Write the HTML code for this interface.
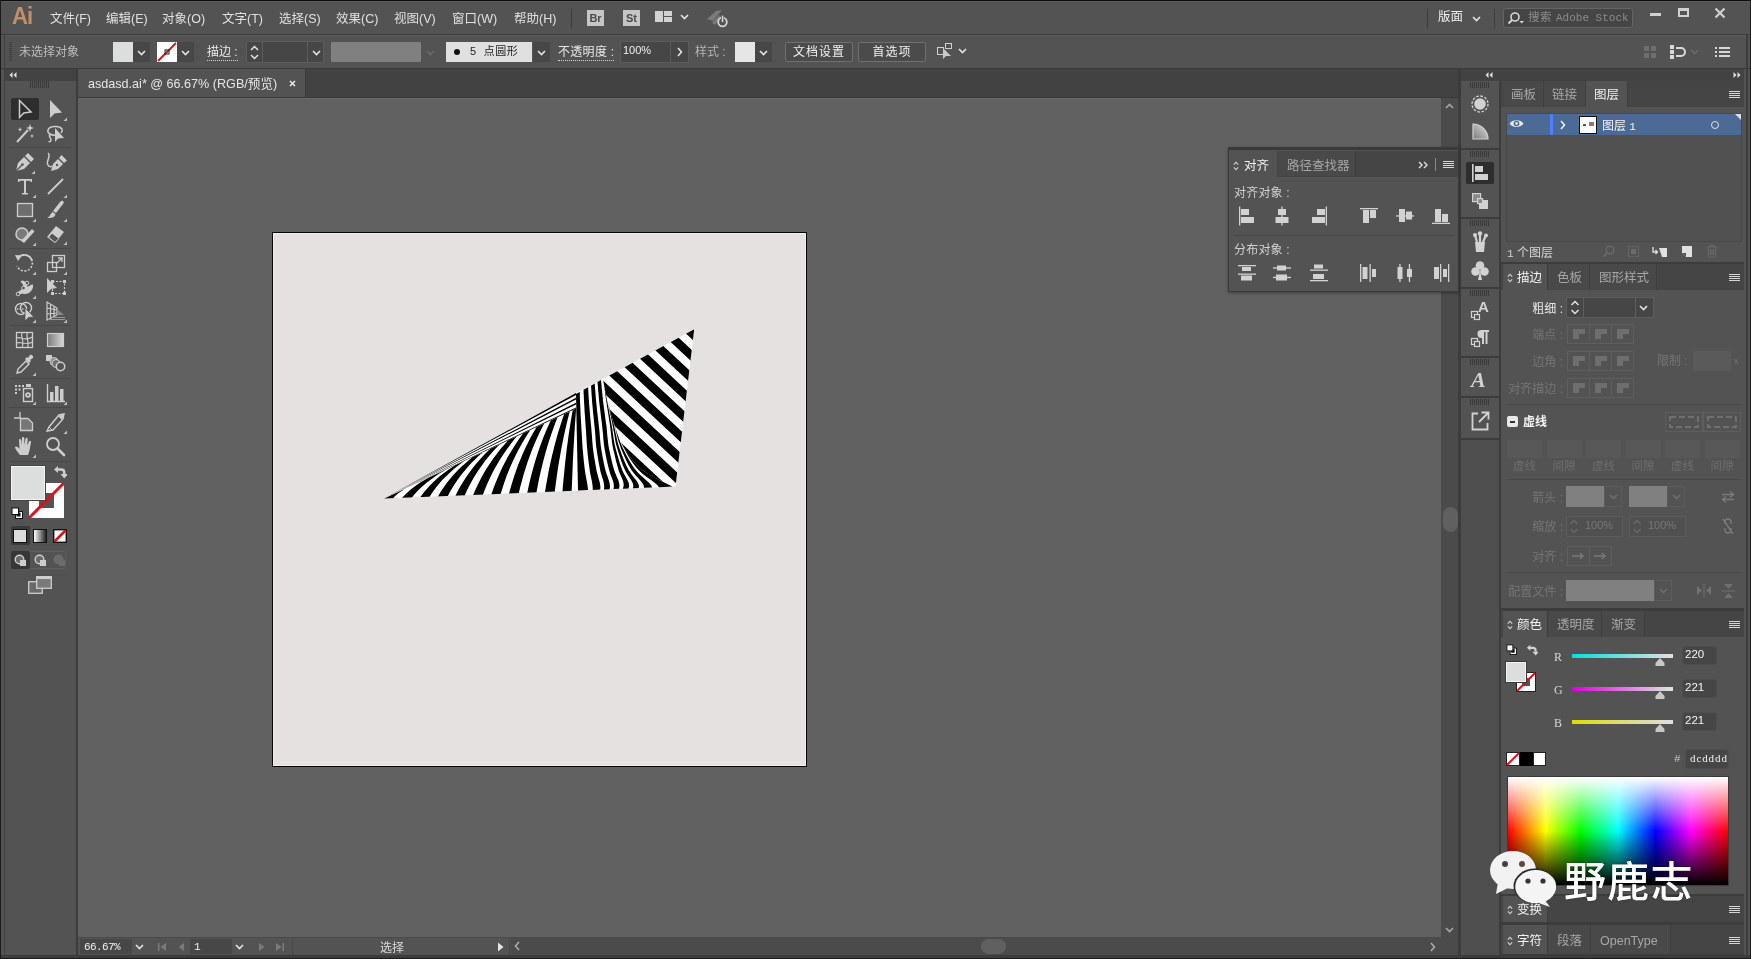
<!DOCTYPE html>
<html lang="zh-CN">
<head>
<meta charset="utf-8">
<title>asdasd.ai* @ 66.67% (RGB/预览)</title>
<style>
*{box-sizing:border-box;margin:0;padding:0}
html,body{width:1751px;height:959px;overflow:hidden;background:#2b2b2b}
body{position:relative;font-family:"Liberation Sans","Noto Sans CJK SC",sans-serif;font-size:12px;color:#dcdcdc;line-height:1}
.abs{position:absolute}
#app{position:absolute;left:0;top:0;width:1751px;height:959px;background:#535353;overflow:hidden;will-change:transform}
/* menu bar */
#menubar{left:2px;top:1px;width:1748px;height:33px;background:#535353;border-top:1px solid #5c5c5c}
#menubar .mi{position:absolute;top:11px;font-size:12.5px;color:#e0e0e0;white-space:nowrap}
#ailogo{left:10px;top:3px;font-size:23px;font-weight:bold;color:#c48e68;letter-spacing:-1px;transform:scaleX(.96);transform-origin:left}
/* control bar */
#ctrl{left:2px;top:35px;width:1748px;height:33px;background:#535353;border-top:1px solid #5b5b5b}
#ctrl .t{position:absolute;font-size:12px;white-space:nowrap}
.hline{position:absolute;background:#383838;height:1px}
/* tab strip */
#tabstrip{left:78px;top:69px;width:1380px;height:28px;background:#424242}
#doctab{left:0;top:0;width:228px;height:28px;background:#535353;border-right:1px solid #3a3a3a}
#doctab span{position:absolute;left:10px;top:9px;font-size:12.6px;color:#e6e6e6;white-space:nowrap}
/* canvas */
#canvas{left:78px;top:98px;width:1363px;height:839px;background:#616161;border-top:1px solid #686868}
#artboard{left:272px;top:232px;width:535px;height:535px;background:#e5e1e0;border:1px solid #050505;box-shadow:inset 0 0 0 1px #f1eeed}
/* toolbar */
#tools{left:4px;top:69px;width:72px;height:886px;background:#535353}
#toolshead{left:4px;top:69px;width:72px;height:12px;background:#434343}
/* scrollbars / status */
#vscroll{left:1441px;top:98px;width:17px;height:839px;background:#585858}
#status{left:78px;top:937px;width:1380px;height:18px;background:#535353;border-top:1px solid #484848}
/* right dock */
#dockhead{left:1460px;top:69px;width:287px;height:12px;background:#434343}
#icondock{left:1462px;top:81px;width:37px;height:874px;background:#535353}
#panels{left:1501px;top:81px;width:246px;height:874px;background:#3d3d3d}
.panel{position:absolute;left:0;width:246px;background:#535353}
.ptabs{position:absolute;left:0;top:0;width:246px;height:27px;background:#464646}
.ptab{position:absolute;top:0;height:27px;font-size:12.5px;color:#a8a8a8;padding-top:7px;text-align:center;white-space:nowrap;border-right:1px solid #404040}
.ptab.on{background:#535353;color:#f0f0f0}

.chev{position:absolute;width:9px;height:6px}
.dd{position:absolute;width:17px;height:20px;background:#474747}
.dd svg{position:absolute;left:4px;top:8px}
.sw{position:absolute;width:20px;height:20px}
.inp{position:absolute;background:#464646;border:1px solid #5c5c5c}
.btn{position:absolute;height:20px;border:1px solid #707070;background:#4b4b4b;color:#f0f0f0;font-size:12px;text-align:center;padding-top:3px;border-radius:2px;white-space:nowrap;letter-spacing:1px}
.dot{border-bottom:1px dotted #d0d0d0;padding-bottom:1px}
</style>
</head>
<body>
<div id="app">
  <div id="menubar" class="abs">
    <div id="ailogo" class="abs">Ai</div>
    <div class="mi" style="left:48px">文件(F)</div>
    <div class="mi" style="left:104px">编辑(E)</div>
    <div class="mi" style="left:160px">对象(O)</div>
    <div class="mi" style="left:220px">文字(T)</div>
    <div class="mi" style="left:277px">选择(S)</div>
    <div class="mi" style="left:334px">效果(C)</div>
    <div class="mi" style="left:392px">视图(V)</div>
    <div class="mi" style="left:450px">窗口(W)</div>
    <div class="mi" style="left:512px">帮助(H)</div>
    <div class="abs" style="left:569px;top:7px;width:1px;height:20px;background:#3e3e3e"></div>
    <div class="abs" style="left:585px;top:8px;width:17px;height:16px;background:#c6c6c6;color:#4a4a4a;font-weight:bold;font-size:11px;text-align:center;padding-top:3px">Br</div>
    <div class="abs" style="left:621px;top:8px;width:17px;height:16px;background:#c6c6c6;color:#4a4a4a;font-weight:bold;font-size:11px;text-align:center;padding-top:3px">St</div>
    <svg class="abs" style="left:653px;top:9px" width="17" height="11" viewBox="0 0 17 11"><g fill="#d2d2d2"><rect x="0" y="0" width="8" height="11"/><rect x="9" y="0" width="8" height="5"/><rect x="9" y="6" width="8" height="5"/></g></svg>
    <div class="abs" style="left:678px;top:12px"><svg class="chev" viewBox="0 0 9 6"><path d="M1 1 L4.5 4.5 L8 1" fill="none" stroke="#e4e4e4" stroke-width="1.6"/></svg></div>
    <svg class="abs" style="left:702px;top:6px" width="26" height="22" viewBox="0 0 26 22"><path d="M3 11 L12 3 L18 2 L9 13 Z M8 15 L15 7 L17 9 L11 17 Z" fill="#7a7a7a"/><circle cx="18.500" cy="14" r="4.300" fill="none" stroke="#d6d6d6" stroke-width="1.800"/><rect x="17" y="6" width="3" height="8" fill="#4a4a4a"/><rect x="17.700" y="7.500" width="1.700" height="6.500" fill="#d6d6d6"/></svg>
    <div class="abs" style="left:1425px;top:7px;width:1px;height:20px;background:#3e3e3e"></div>
    <div class="mi" style="left:1436px;top:9px;font-size:12.5px;color:#f0f0f0">版面</div>
    <div class="abs" style="left:1470px;top:14px"><svg class="chev" viewBox="0 0 9 6"><path d="M1 1 L4.5 4.5 L8 1" fill="none" stroke="#e4e4e4" stroke-width="1.6"/></svg></div>
    <div class="abs" style="left:1492px;top:7px;width:1px;height:20px;background:#3e3e3e"></div>
    <div class="abs" style="left:1501px;top:6px;width:130px;height:20px;background:#454545;border:1px solid #646464;border-radius:3px"></div>
    <svg class="abs" style="left:1505px;top:9px" width="18" height="14" viewBox="0 0 18 14"><circle cx="8" cy="6" r="4" fill="none" stroke="#d6d6d6" stroke-width="1.600"/><path d="M5 9 L1.500 12.500" stroke="#d6d6d6" stroke-width="2"/><path d="M12.500 10 L17 10 L14.700 12.500 Z" fill="#d6d6d6"/></svg>
    <div class="mi" style="left:1526px;top:10px;font-size:11.5px;color:#8c8c8c;letter-spacing:.6px">搜索 <span style="font-family:'Liberation Mono',monospace;font-size:11px;letter-spacing:0">Adobe Stock</span></div>
    <div class="abs" style="left:1648px;top:11px;width:11px;height:3px;background:#d0d0d0"></div>
    <div class="abs" style="left:1676px;top:6px;width:11px;height:9px;border:2px solid #d0d0d0;border-top-width:3px"></div>
    <svg class="abs" style="left:1712px;top:5px" width="12" height="12" viewBox="0 0 12 12"><path d="M1.500 1.500 L10.500 10.500 M10.500 1.500 L1.500 10.500" stroke="#d0d0d0" stroke-width="2.200"/></svg>
  </div>
  <div id="ctrl" class="abs">
    <svg class="abs" style="left:7px;top:6px" width="4" height="20"><g fill="#3c3c3c"><rect x="0" y="0" width="3" height="1"/><rect x="0" y="2" width="3" height="1"/><rect x="0" y="4" width="3" height="1"/><rect x="0" y="6" width="3" height="1"/><rect x="0" y="8" width="3" height="1"/><rect x="0" y="10" width="3" height="1"/><rect x="0" y="12" width="3" height="1"/><rect x="0" y="14" width="3" height="1"/><rect x="0" y="16" width="3" height="1"/><rect x="0" y="18" width="3" height="1"/></g></svg>
    <div class="t" style="left:17px;top:10px;color:#bdbdbd">未选择对象</div>
    <div class="sw" style="left:111px;top:6px;background:#dcdddd"></div>
    <div class="dd" style="left:131px;top:6px"><svg class="chev" viewBox="0 0 9 6"><path d="M1 1 L4.5 4.5 L8 1" fill="none" stroke="#e4e4e4" stroke-width="1.6"/></svg></div>
    <svg class="sw" style="left:155px;top:6px" viewBox="0 0 20 20"><rect width="20" height="20" fill="#fff"/><path d="M1 19 L19 1" stroke="#d8141c" stroke-width="2"/><rect x="8" y="8" width="4" height="4" fill="none" stroke="#222" stroke-width="1"/></svg>
    <div class="dd" style="left:175px;top:6px"><svg class="chev" viewBox="0 0 9 6"><path d="M1 1 L4.5 4.5 L8 1" fill="none" stroke="#e4e4e4" stroke-width="1.6"/></svg></div>
    <div class="t" style="left:205px;top:10px;color:#e8e8e8"><span class="dot">描边 :</span></div>
    <div class="inp" style="left:244px;top:5px;width:78px;height:22px"></div>
    <svg class="abs" style="left:247px;top:8px" width="11" height="17" viewBox="0 0 11 17"><path d="M2 6 L5.5 2.5 L9 6 M2 11 L5.5 14.5 L9 11" fill="none" stroke="#e4e4e4" stroke-width="1.5"/></svg>
    <div class="abs" style="left:260px;top:6px;width:1px;height:20px;background:#5c5c5c"></div>
    <div class="abs" style="left:305px;top:6px;width:1px;height:20px;background:#5c5c5c"></div>
    <div class="abs" style="left:310px;top:14px"><svg class="chev" viewBox="0 0 9 6"><path d="M1 1 L4.5 4.5 L8 1" fill="none" stroke="#e4e4e4" stroke-width="1.6"/></svg></div>
    <div class="abs" style="left:329px;top:6px;width:90px;height:20px;background:#808080"></div>
    <div class="abs" style="left:424px;top:14px"><svg class="chev" viewBox="0 0 9 6"><path d="M1 1 L4.5 4.5 L8 1" fill="none" stroke="#6a6a6a" stroke-width="1.6"/></svg></div>
    <div class="abs" style="left:444px;top:6px;width:86px;height:20px;background:#e0e0e0;color:#222;font-size:11px"><span class="abs" style="left:8px;top:7px;width:6px;height:6px;border-radius:3px;background:#111"></span><span class="abs" style="left:24px;top:4px;white-space:nowrap;letter-spacing:.5px">5 &nbsp;点圆形</span></div>
    <div class="dd" style="left:531px;top:6px"><svg class="chev" viewBox="0 0 9 6"><path d="M1 1 L4.5 4.5 L8 1" fill="none" stroke="#e4e4e4" stroke-width="1.6"/></svg></div>
    <div class="t" style="left:556px;top:10px;color:#e8e8e8;letter-spacing:.3px"><span class="dot">不透明度 :</span></div>
    <div class="inp" style="left:618px;top:5px;width:69px;height:22px"></div>
    <div class="t" style="left:621px;top:9px;color:#f0f0f0;font-size:11px">100%</div>
    <div class="abs" style="left:668px;top:6px;width:1px;height:20px;background:#5c5c5c"></div>
    <svg class="abs" style="left:675px;top:11px" width="6" height="10" viewBox="0 0 6 10"><path d="M1 1 L4.5 5 L1 9" fill="none" stroke="#e4e4e4" stroke-width="1.6"/></svg>
    <div class="t" style="left:693px;top:10px;color:#b4b4b4">样式 :</div>
    <div class="sw" style="left:733px;top:6px;background:#e6e6e6"></div>
    <div class="dd" style="left:753px;top:6px"><svg class="chev" viewBox="0 0 9 6"><path d="M1 1 L4.5 4.5 L8 1" fill="none" stroke="#e4e4e4" stroke-width="1.6"/></svg></div>
    <div class="btn" style="left:783px;top:6px;width:68px">文档设置</div>
    <div class="btn" style="left:856px;top:6px;width:68px">首选项</div>
    <svg class="abs" style="left:934px;top:6px" width="18" height="18" viewBox="0 0 18 18"><rect x="1.5" y="5.5" width="6" height="7" fill="none" stroke="#d0d0d0"/><rect x="9.5" y="1.5" width="6" height="5" fill="none" stroke="#d0d0d0"/><path d="M7 6 L7 17 L10 14 L15 14 Z" fill="#c8c8c8"/></svg>
    <div class="abs" style="left:956px;top:12px"><svg class="chev" viewBox="0 0 9 6"><path d="M1 1 L4.5 4.5 L8 1" fill="none" stroke="#e4e4e4" stroke-width="1.6"/></svg></div>
    <svg class="abs" style="left:1641px;top:9px" width="14" height="14" viewBox="0 0 14 14"><g fill="#6e6e6e"><rect x="1" y="1" width="5" height="5"/><rect x="8" y="1" width="5" height="5"/><rect x="1" y="8" width="5" height="5"/><rect x="8" y="8" width="5" height="5"/></g></svg>
    <svg class="abs" style="left:1667px;top:8px" width="18" height="16" viewBox="0 0 18 16"><g fill="#d8d8d8"><rect x="1" y="1" width="4" height="4"/><rect x="1" y="6" width="4" height="4"/><rect x="1" y="11" width="4" height="4"/></g><path d="M7 4 H12 A4 4 0 0 1 12 12 H7" fill="none" stroke="#d8d8d8" stroke-width="2"/></svg>
    <div class="abs" style="left:1688px;top:13px"><svg class="chev" viewBox="0 0 9 6"><path d="M1 1 L4.5 4.5 L8 1" fill="none" stroke="#6a6a6a" stroke-width="1.6"/></svg></div>
    <svg class="abs" style="left:1713px;top:10px" width="16" height="12" viewBox="0 0 16 12"><g fill="#d8d8d8"><rect x="0" y="1" width="2" height="2"/><rect x="4" y="1" width="11" height="2"/><rect x="0" y="5" width="2" height="2"/><rect x="4" y="5" width="11" height="2"/><rect x="0" y="9" width="2" height="2"/><rect x="4" y="9" width="11" height="2"/></g></svg>
  </div>
  <div class="abs" style="left:0;top:34px;width:1751px;height:1px;background:#3a3a3a"></div>
  <div class="abs" style="left:0;top:68px;width:1751px;height:1px;background:#3a3a3a"></div>
  <div class="abs" style="left:78px;top:97px;width:1380px;height:1px;background:#3a3a3a"></div>
  <div class="abs" style="left:76px;top:69px;width:2px;height:888px;background:#3c3c3c"></div>
  <div class="abs" style="left:4px;top:35px;width:1px;height:923px;background:#404040;z-index:40"></div>
  <div class="abs" style="left:0;top:955px;width:1751px;height:3px;background:#3c3c3c"></div>
  <div id="tabstrip" class="abs">
    <div id="doctab" class="abs"><span>asdasd.ai* @ 66.67% (RGB/预览)</span><svg class="abs" style="left:211px;top:11px" width="7" height="7" viewBox="0 0 7 7"><path d="M1 1 L6 6 M6 1 L1 6" stroke="#e8e8e8" stroke-width="1.600"/></svg></div>
  </div>
  <!--TOOLS--><div id="toolshead" class="abs"></div>
  <div id="tools" class="abs" style="top:81px;height:874px"></div>
  <svg class="abs" style="left:9px;top:72px" width="8" height="6" viewBox="0 0 8 6"><path d="M3.500 0 L0.500 3 L3.500 6 Z M7.500 0 L4.500 3 L7.500 6 Z" fill="#e0e0e0"/></svg>
  <div class="abs" style="left:30px;top:81px;width:20px;height:7px;background:repeating-linear-gradient(90deg,#3a3a3a 0 1px,transparent 1px 2px)"></div>
  <div class="abs" style="left:11px;top:98px;width:28px;height:22px;background:#2e2e2e;border-radius:2px"></div>
  <div class="abs" style="left:9px;top:147px;width:62px;height:1px;background:#484848"></div>
  <div class="abs" style="left:9px;top:248px;width:62px;height:1px;background:#484848"></div>
  <div class="abs" style="left:9px;top:325px;width:62px;height:1px;background:#484848"></div>
  <div class="abs" style="left:9px;top:378px;width:62px;height:1px;background:#484848"></div>
  <div class="abs" style="left:9px;top:407px;width:62px;height:1px;background:#484848"></div>
  <div class="abs" style="left:9px;top:461px;width:62px;height:1px;background:#484848"></div>
  <svg class="abs" style="left:12px;top:97px" width="26" height="26" viewBox="0 0 26 26"><path d="M7.500 3.500 L7.500 20.500 L11.800 16 L19 15 Z" fill="none" stroke="#cdcdcd" stroke-width="1.500" stroke-linejoin="miter"/></svg>
  <svg class="abs" style="left:43px;top:97px" width="26" height="26" viewBox="0 0 26 26"><path d="M7 3 L7 21 L11.500 16.500 L19 15.500 Z" fill="#cdcdcd"/><path d="M24 20.500 L24 24 L20.500 24 Z" fill="#bdbdbd"/></svg>
  <svg class="abs" style="left:12px;top:122px" width="26" height="26" viewBox="0 0 26 26"><path d="M5 20 L16 8" stroke="#cdcdcd" stroke-width="2"/><path d="M18 2 L19 5 L22 6 L19 7 L18 10 L17 7 L14 6 L17 5 Z M8 5 L8.700 7 L10.500 7.500 L8.700 8 L8 10 L7.300 8 L5.500 7.500 L7.300 7 Z M20 12 L20.600 13.500 L22 14 L20.600 14.500 L20 16 L19.400 14.500 L18 14 L19.400 13.500 Z" fill="#cdcdcd"/></svg>
  <svg class="abs" style="left:43px;top:122px" width="26" height="26" viewBox="0 0 26 26"><path d="M14 13 C8 14 4 11 5 8 C6 4 16 3 19 7 C20 9 19 10 18 11 M7 12 C5 14 8 16 8 18 C8 20 6 20 6 19" fill="none" stroke="#cdcdcd" stroke-width="1.500"/><path d="M12 6 L12 20 L15 16.500 L21 16 Z" fill="#cdcdcd"/></svg>
  <svg class="abs" style="left:11px;top:150px" width="26" height="26" viewBox="0 0 26 26"><path d="M5 21 L7 13 L13 7 L19 13 L13 19 Z" fill="#cdcdcd"/><path d="M14 6 L17 3 L23 9 L20 12 Z" fill="#cdcdcd"/><path d="M5 21 L11 15" stroke="#535353" stroke-width="1.200"/><circle cx="11.500" cy="14.500" r="1.300" fill="#535353"/><path d="M24 20.500 L24 24 L20.500 24 Z" fill="#bdbdbd"/></svg>
  <svg class="abs" style="left:43px;top:150px" width="26" height="26" viewBox="0 0 26 26"><path d="M8 21 L10 14 L15 9 L20 14 L15 19 Z" fill="#cdcdcd"/><path d="M16 8 L18.500 5 L24 10.500 L21 13 Z" fill="#cdcdcd"/><path d="M5 3 C9 6 2 12 5 15 C6 17 8 17 9 16" fill="none" stroke="#cdcdcd" stroke-width="1.500"/><circle cx="14" cy="15" r="1.200" fill="#535353"/></svg>
  <svg class="abs" style="left:12px;top:174px" width="26" height="26" viewBox="0 0 26 26"><path d="M6 5 H20 V8 H18.500 V6.800 H14 V19 H16 V20.500 H10 V19 H12 V6.800 H7.500 V8 H6 Z" fill="#cdcdcd"/><path d="M24 20.500 L24 24 L20.500 24 Z" fill="#bdbdbd"/></svg>
  <svg class="abs" style="left:43px;top:174px" width="26" height="26" viewBox="0 0 26 26"><path d="M5 20 L20 5" stroke="#cdcdcd" stroke-width="1.800"/><path d="M24 20.500 L24 24 L20.500 24 Z" fill="#bdbdbd"/></svg>
  <svg class="abs" style="left:12px;top:198px" width="26" height="26" viewBox="0 0 26 26"><rect x="5.500" y="5.500" width="15" height="13" fill="#6e6e6e" stroke="#cdcdcd" stroke-width="1.300"/><path d="M24 20.500 L24 24 L20.500 24 Z" fill="#bdbdbd"/></svg>
  <svg class="abs" style="left:43px;top:198px" width="26" height="26" viewBox="0 0 26 26"><path d="M20 3 C21 4 21 5 20 6 L13 15 L10 13 L17 4 C18 3 19 2.500 20 3 Z" fill="#cdcdcd"/><path d="M9.500 14 L12.500 16 C12 20 8 20 4 20 C7 19 7 16 9.500 14 Z" fill="#cdcdcd"/><path d="M24 20.500 L24 24 L20.500 24 Z" fill="#bdbdbd"/></svg>
  <svg class="abs" style="left:12px;top:222px" width="26" height="26" viewBox="0 0 26 26"><circle cx="10" cy="12" r="6" fill="#7a7a7a" stroke="#cdcdcd" stroke-width="1.500"/><path d="M10 22 L21 10 L23.500 12.500 L13 24 Z" fill="#cdcdcd" transform="translate(-1,-3)"/><path d="M24 20.500 L24 24 L20.500 24 Z" fill="#bdbdbd"/></svg>
  <svg class="abs" style="left:43px;top:221px" width="26" height="26" viewBox="0 0 26 26"><path d="M4 16 L13 5 L21 11 L12 22 Z" fill="#cdcdcd"/><path d="M5.500 16.200 L9 12 L16 17.500 L12 21.500 Z" fill="#535353" stroke="#cdcdcd" stroke-width="1"/><path d="M24 20.500 L24 24 L20.500 24 Z" fill="#bdbdbd"/></svg>
  <svg class="abs" style="left:12px;top:251px" width="26" height="26" viewBox="0 0 26 26"><path d="M7 6 A8 8 0 1 1 5 15" fill="none" stroke="#cdcdcd" stroke-width="1.600" stroke-dasharray="2 1.600" /><path d="M6 7 A8 8 0 0 1 20 10" fill="none" stroke="#cdcdcd" stroke-width="1.700"/><path d="M3 4 L10 4.500 L6 10 Z" fill="#cdcdcd"/><path d="M24 20.500 L24 24 L20.500 24 Z" fill="#bdbdbd"/></svg>
  <svg class="abs" style="left:43px;top:251px" width="26" height="26" viewBox="0 0 26 26"><rect x="4.500" y="11.500" width="9" height="9" fill="none" stroke="#cdcdcd" stroke-width="1.300"/><rect x="9.500" y="4.500" width="12" height="12" fill="none" stroke="#cdcdcd" stroke-width="1.300"/><path d="M13 13 L19 7 M15 7 H19 V11" fill="none" stroke="#cdcdcd" stroke-width="1.300"/><path d="M24 20.500 L24 24 L20.500 24 Z" fill="#bdbdbd"/></svg>
  <svg class="abs" style="left:12px;top:275px" width="26" height="26" viewBox="0 0 26 26"><path d="M5 19 C7 14 9 17 11 12 C12 8 8 8 9 6 C12 4 14 8 15 11 C16 13 20 8 21 10 C22 14 17 20 12 19 C9 18 8 20 5 19 Z" fill="#cdcdcd"/><circle cx="6" cy="19" r="1.800" fill="#535353" stroke="#cdcdcd"/><circle cx="11.500" cy="13" r="1.800" fill="#535353" stroke="#cdcdcd"/><circle cx="15" cy="8" r="1.800" fill="#535353" stroke="#cdcdcd"/><path d="M24 20.500 L24 24 L20.500 24 Z" fill="#bdbdbd"/></svg>
  <svg class="abs" style="left:43px;top:275px" width="26" height="26" viewBox="0 0 26 26"><rect x="9.500" y="6.500" width="12" height="12" fill="none" stroke="#cdcdcd" stroke-width="1.200" stroke-dasharray="2 1.500"/><g fill="#cdcdcd"><rect x="8" y="5" width="3" height="3"/><rect x="20" y="5" width="3" height="3"/><rect x="8" y="17" width="3" height="3"/><rect x="20" y="17" width="3" height="3"/><path d="M4 3 L4 18 L8 14 L14 13 Z"/></g></svg>
  <svg class="abs" style="left:12px;top:299px" width="26" height="26" viewBox="0 0 26 26"><circle cx="9" cy="10" r="5.500" fill="none" stroke="#cdcdcd" stroke-width="1.400"/><circle cx="14" cy="9" r="5.500" fill="none" stroke="#cdcdcd" stroke-width="1.400"/><path d="M5 10 H13" stroke="#cdcdcd" stroke-width="1.300" stroke-dasharray="1.300 1.300"/><path d="M13 9 L13 22 L16.500 18.500 L22 18 Z" fill="#cdcdcd" stroke="#535353" stroke-width=".8"/><path d="M24 20.500 L24 24 L20.500 24 Z" fill="#bdbdbd"/></svg>
  <svg class="abs" style="left:43px;top:299px" width="26" height="26" viewBox="0 0 26 26"><path d="M4 3 L4 21 L14 16 L14 9 Z M4 9 L14 11 M4 15 L14 14 M7.500 4.700 L7.500 19.300 M11 6.800 L11 17.500" fill="none" stroke="#cdcdcd" stroke-width="1.200"/><path d="M14 10 L21 16 H14 Z" fill="#8a8a8a"/><path d="M5 20.500 H22 M9 18.500 H22" stroke="#9a9a9a" stroke-width="1.200"/><path d="M24 20.500 L24 24 L20.500 24 Z" fill="#bdbdbd"/></svg>
  <svg class="abs" style="left:12px;top:328px" width="26" height="26" viewBox="0 0 26 26"><rect x="4.500" y="4.500" width="16" height="15" fill="none" stroke="#cdcdcd" stroke-width="1.300"/><path d="M4.500 10 C9 8 12 14 20.500 9 M4.500 15 C9 13 14 18 20.500 14 M10 4.500 C8 9 13 13 10 19.500 M15.500 4.500 C13 9 18 14 15.500 19.500" fill="none" stroke="#cdcdcd" stroke-width="1.100"/></svg>
  <svg class="abs" style="left:43px;top:328px" width="26" height="26" viewBox="0 0 26 26"><defs><linearGradient id="tg1" x1="0" x2="1"><stop offset="0" stop-color="#7a7a7a"/><stop offset="1" stop-color="#d8d8d8"/></linearGradient></defs><rect x="4.500" y="5.500" width="16" height="13" fill="url(#tg1)" stroke="#cdcdcd" stroke-width="1.200"/></svg>
  <svg class="abs" style="left:12px;top:352px" width="26" height="26" viewBox="0 0 26 26"><path d="M5 21 L6 17 L14 9 L17 12 L9 20 Z" fill="none" stroke="#cdcdcd" stroke-width="1.400"/><path d="M13 7 L15 5 L16 6 L18 3 C19 2 22 4 21 6 L18 8 L19 9 L17 11 Z" fill="#cdcdcd"/><path d="M24 20.500 L24 24 L20.500 24 Z" fill="#bdbdbd"/></svg>
  <svg class="abs" style="left:43px;top:352px" width="26" height="26" viewBox="0 0 26 26"><rect x="3" y="3" width="6" height="6" fill="#cdcdcd"/><circle cx="11" cy="9.500" r="4" fill="#8a8a8a" stroke="#cdcdcd" stroke-width="1"/><circle cx="13" cy="11.500" r="4" fill="#707070" stroke="#cdcdcd" stroke-width="1"/><circle cx="17.500" cy="14.500" r="4.200" fill="#535353" stroke="#cdcdcd" stroke-width="1.500"/></svg>
  <svg class="abs" style="left:12px;top:381px" width="26" height="26" viewBox="0 0 26 26"><g fill="#cdcdcd"><rect x="3" y="4" width="2" height="2"/><rect x="6.500" y="4" width="2" height="2"/><rect x="10" y="4" width="2" height="2"/><rect x="3" y="7.500" width="2" height="2"/><rect x="6.500" y="7.500" width="2" height="2"/><rect x="3" y="11" width="2" height="2"/><rect x="14" y="3" width="5" height="3"/></g><rect x="11.500" y="7.500" width="9" height="13" fill="none" stroke="#cdcdcd" stroke-width="1.400"/><circle cx="16" cy="14" r="2.800" fill="#cdcdcd"/><circle cx="16" cy="14" r="1" fill="#535353"/><path d="M24 20.500 L24 24 L20.500 24 Z" fill="#bdbdbd"/></svg>
  <svg class="abs" style="left:43px;top:381px" width="26" height="26" viewBox="0 0 26 26"><path d="M4.500 3 V20.500 H22" fill="none" stroke="#cdcdcd" stroke-width="1.400"/><g fill="#cdcdcd"><rect x="7" y="11" width="3.500" height="9"/><rect x="12" y="5" width="3.500" height="15"/><rect x="17" y="8" width="3.500" height="12"/></g><path d="M24 20.500 L24 24 L20.500 24 Z" fill="#bdbdbd"/></svg>
  <svg class="abs" style="left:12px;top:410px" width="26" height="26" viewBox="0 0 26 26"><path d="M8 2 V8 M2 8 H8" stroke="#cdcdcd" stroke-width="1.300"/><path d="M8.500 8.500 H16 L20.500 13 V20.500 H8.500 Z" fill="#777" stroke="#cdcdcd" stroke-width="1.300"/></svg>
  <svg class="abs" style="left:43px;top:410px" width="26" height="26" viewBox="0 0 26 26"><path d="M4 21 L6 17 L16 5 L21 4 L20 9 L10 20 Z" fill="none" stroke="#cdcdcd" stroke-width="1.400"/><path d="M15 6 L21 4 L19 10 Z" fill="#cdcdcd"/><path d="M6 17 L9 20" stroke="#cdcdcd"/><path d="M24 20.500 L24 24 L20.500 24 Z" fill="#bdbdbd"/></svg>
  <svg class="abs" style="left:12px;top:434px" width="26" height="26" viewBox="0 0 26 26"><path d="M8 21 C6 18 3 15 3 13 C4 11.500 6 13 7.500 15 L7 6 C7 4.500 9 4.500 9.200 6 L9.800 11 L10 4 C10 2.500 12.200 2.500 12.300 4 L12.500 11 L13.500 4.800 C13.800 3.300 15.800 3.600 15.700 5 L15.200 11.500 L17 7.500 C17.600 6.200 19.400 7 19 8.300 C18 12 18 17 16 21 Z" fill="#cdcdcd"/><path d="M24 20.500 L24 24 L20.500 24 Z" fill="#bdbdbd"/></svg>
  <svg class="abs" style="left:43px;top:434px" width="26" height="26" viewBox="0 0 26 26"><circle cx="10" cy="10" r="6" fill="none" stroke="#cdcdcd" stroke-width="1.800"/><path d="M14.500 14.500 L21 21" stroke="#cdcdcd" stroke-width="2.600" stroke-linecap="round"/></svg>
  <div class="abs" style="left:29px;top:483px;width:35px;height:35px;background:#fff"></div>
  <div class="abs" style="left:39px;top:493px;width:15px;height:15px;background:#535353"></div>
  <svg class="abs" style="left:29px;top:483px" width="35" height="35" viewBox="0 0 35 35"><path d="M0 35 L35 0" stroke="#d8141c" stroke-width="3"/></svg>
  <div class="abs" style="left:11px;top:466px;width:34px;height:34px;background:#dcdddd;border:1px solid #f4f4f4;box-shadow:0 0 0 1px #444"></div>
  <svg class="abs" style="left:53px;top:465px" width="14" height="14" viewBox="0 0 14 14"><path d="M5 1 L1 4.500 L5 8 V5.800 H8 C9.500 5.800 10 6.500 10 8 V9 H12.500 V7.500 C12.500 4.500 11 3.200 8 3.200 H5 Z" fill="#cdcdcd"/><path d="M7.500 9 H15 L11.250 13.500 Z" fill="#cdcdcd"/></svg>
  <svg class="abs" style="left:11px;top:507px" width="12" height="12" viewBox="0 0 12 12"><rect x="4.500" y="4.500" width="7" height="7" fill="#fff" stroke="#111"/><rect x="5.500" y="5.500" width="4" height="4" fill="#111"/><rect x="1" y="1" width="6.500" height="6.500" fill="#fff" stroke="#111"/></svg>
  <div class="abs" style="left:11px;top:526px;width:19px;height:19px;background:#3a3a3a;border-radius:2px"></div>
  <div class="abs" style="left:13px;top:529px;width:14px;height:14px;background:#dcdddd;border:1.500px solid #111"></div>
  <div class="abs" style="left:33px;top:529px;width:14px;height:14px;background:linear-gradient(90deg,#fff,#222);border:1.500px solid #111"></div>
  <svg class="abs" style="left:53px;top:529px" width="14" height="14" viewBox="0 0 14 14"><rect x=".7" y=".7" width="12.600" height="12.600" fill="#fff" stroke="#111" stroke-width="1.400"/><path d="M1.500 12.500 L12.500 1.500" stroke="#d8141c" stroke-width="2.600"/></svg>
  <div class="abs" style="left:11px;top:551px;width:55px;height:18px;border:1px solid #5e5e5e;border-radius:2px"></div>
  <div class="abs" style="left:11px;top:551px;width:19px;height:18px;background:#363636;border-radius:2px"></div>
  <svg class="abs" style="left:14px;top:554px;opacity:1" width="13" height="13" viewBox="0 0 13 13"><circle cx="5.500" cy="5.500" r="4.300" fill="#6a6a6a" stroke="#cdcdcd" stroke-width="1.400"/><rect x="6" y="6" width="6" height="6" fill="#cdcdcd"/></svg>
  <svg class="abs" style="left:34px;top:554px;opacity:1" width="13" height="13" viewBox="0 0 13 13"><circle cx="5.500" cy="5.500" r="4.300" fill="#6a6a6a" stroke="#cdcdcd" stroke-width="1.400"/><rect x="6" y="6" width="6" height="6" fill="#cdcdcd"/></svg>
  <svg class="abs" style="left:53px;top:554px;opacity:1" width="13" height="13" viewBox="0 0 13 13"><circle cx="5.500" cy="5.500" r="4.300" fill="#6a6a6a" stroke="#6c6c6c" stroke-width="1.400"/><rect x="6" y="6" width="6" height="6" fill="#6c6c6c"/></svg>
  <svg class="abs" style="left:28px;top:576px" width="24" height="18" viewBox="0 0 24 18"><rect x=".7" y="5.700" width="13.600" height="11.600" fill="#6a6a6a" stroke="#cdcdcd" stroke-width="1.300"/><rect x="8.700" y=".7" width="14.600" height="11.600" fill="#7a7a7a" stroke="#cdcdcd" stroke-width="1.300"/><rect x="8" y="0" width="16" height="3" fill="#cdcdcd"/></svg><!--/TOOLS-->
  <div id="canvas" class="abs"></div>
  <div id="artboard" class="abs"></div>
  <!--ART--><svg class="abs" style="left:0;top:0" width="1751" height="959" viewBox="0 0 1751 959"><path d="M383.9 498.6 L576 393.1 L603 379 L694.2 329.3 L675.5 486.5Z" fill="#fff"/><clipPath id="cR"><path d="M603 379 L694.2 329.3 L675.5 486.5 L672.6 486.6 L670.2 485.3 L666.9 483.8 L663 481.8 L658.7 479.7 L654.3 477.4 L649.9 474.9 L646 472.5 L642.5 470 L639.6 467.5 L636.8 464.8 L634.3 462 L631.9 459.2 L629.6 456.3 L627.6 453.4 L625.6 450.5 L623.8 447.6 L622.2 444.8 L620.8 442 L619.5 439.3 L618.4 436.5 L617.4 433.7 L616.4 430.9 L615.4 428 L614.4 425 L613.3 421.8 L612.3 418.6 L611.3 415.2 L610.3 411.7 L609.4 408.3 L608.5 405 L607.7 401.8 L606.9 398.8 L606.2 395.9 L605.6 392.9 L605 390 L604.5 387.3 L604 384.7 L603.6 382.4 L603.3 380.5 L603 379Z"/></clipPath><g clip-path="url(#cR)" stroke="#000" stroke-width="8.6" fill="none"><path d="M636.4 258.7 L811.9 422.4"/><path d="M625 270.8 L800.6 434.5"/><path d="M613.7 283 L789.2 446.6"/><path d="M602.4 295.1 L777.9 458.8"/><path d="M591.1 307.2 L766.6 470.9"/><path d="M579.7 319.4 L755.3 483.1"/><path d="M568.4 331.5 L743.9 495.2"/><path d="M557.1 343.7 L732.6 507.3"/><path d="M545.8 355.8 L721.3 519.5"/><path d="M534.5 367.9 L710 531.6"/><path d="M523.1 380.1 L698.7 543.8"/><path d="M511.8 392.2 L687.3 555.9"/><path d="M500.5 404.4 L676 568"/><path d="M489.2 416.5 L664.7 580.2"/><path d="M477.9 428.7 L653.4 592.3"/></g><path d="M576 394 L576.1 397.2 L576.1 400.4 L576.2 403.7 L576.3 406.9 L576.3 410.1 L576.4 413.3 L576.5 416.5 L576.5 419.7 L576.6 423 L576.7 426.2 L576.7 429.4 L576.8 432.6 L576.9 435.8 L576.9 439.1 L577 442.3 L577.1 445.5 L577.1 448.7 L577.2 451.9 L577.3 455.1 L577.3 458.4 L577.4 461.6 L577.5 464.8 L577.5 468 L577.6 471.2 L577.7 474.5 L577.7 477.7 L577.8 480.9 L577.9 484.1 L577.9 487.3 L578 490.5 L588 490.1 L587.7 487.1 L587.3 483.9 L586.7 480.8 L586.1 477.6 L585.5 474.3 L585 471.1 L584.6 467.9 L584.2 464.6 L583.8 461.3 L583.5 458 L583.2 454.7 L582.9 451.4 L582.6 448.1 L582.4 444.8 L582.2 441.6 L582 438.3 L581.8 435 L581.6 431.6 L581.4 428.3 L581.2 424.9 L581 421.5 L580.8 418.1 L580.6 414.7 L580.5 411.4 L580.3 408 L580.2 404.7 L580 401.4 L579.9 398.2 L579.8 395 L579.7 391.9Z" fill="#000"/><path d="M583.5 389.8 L583.6 392.7 L583.8 395.9 L583.9 399.2 L584.1 402.6 L584.3 406 L584.5 409.5 L584.7 412.9 L585 416.5 L585.2 420.1 L585.5 423.7 L585.7 427.3 L586 430.8 L586.2 434.2 L586.4 437.6 L586.6 440.9 L586.8 444.3 L587.1 447.6 L587.4 451 L587.7 454.3 L588.1 457.7 L588.5 461.1 L588.9 464.4 L589.4 467.7 L589.8 471 L590.4 474.2 L591.1 477.5 L591.8 480.7 L592.3 483.8 L592.7 486.9 L592.8 489.9 L600.3 489.6 L600.4 486.7 L600 483.7 L599.2 480.6 L598.3 477.4 L597.4 474.1 L596.6 470.9 L596 467.6 L595.4 464.2 L594.8 460.8 L594.2 457.4 L593.7 453.9 L593.2 450.4 L592.8 447 L592.5 443.6 L592.2 440.2 L592 436.7 L591.7 433.2 L591.4 429.7 L591.1 426 L590.7 422.2 L590.4 418.4 L590 414.5 L589.7 410.8 L589.4 407.1 L589.1 403.5 L588.9 400 L588.6 396.4 L588.4 393.1 L588.3 390 L588.1 387.3Z" fill="#000"/><path d="M591 385.7 L591.2 388.3 L591.4 391.3 L591.6 394.7 L591.9 398.3 L592.1 402 L592.5 405.7 L592.8 409.4 L593.2 413.3 L593.6 417.3 L594 421.3 L594.4 425.2 L594.8 429 L595.1 432.6 L595.4 436.2 L595.6 439.7 L595.9 443.2 L596.2 446.6 L596.7 450.1 L597.2 453.6 L597.8 457.1 L598.4 460.7 L599 464.1 L599.7 467.5 L600.3 470.8 L601.2 474.1 L602.2 477.3 L603.2 480.5 L603.9 483.6 L604.2 486.6 L604 489.5 L609.7 489.2 L610 486.5 L609.7 483.5 L608.9 480.4 L607.8 477.2 L606.6 474 L605.6 470.7 L604.8 467.4 L604 464 L603.3 460.4 L602.6 456.9 L602 453.3 L601.3 449.7 L600.8 446.1 L600.4 442.6 L600.1 439.1 L599.8 435.5 L599.5 431.8 L599.1 428.1 L598.7 424.2 L598.2 420.1 L597.7 415.9 L597.2 411.8 L596.8 407.7 L596.4 403.8 L596 400 L595.7 396.2 L595.4 392.5 L595.1 389.1 L594.9 386.1 L594.7 383.6Z" fill="#000"/><path d="M597.5 382.1 L597.7 384.4 L598 387.4 L598.2 390.9 L598.6 394.6 L598.9 398.5 L599.3 402.4 L599.8 406.4 L600.3 410.6 L600.8 414.9 L601.3 419.2 L601.9 423.4 L602.3 427.4 L602.7 431.3 L603.1 435 L603.3 438.6 L603.7 442.2 L604.1 445.8 L604.7 449.4 L605.4 453 L606.1 456.7 L606.8 460.3 L607.6 463.8 L608.4 467.3 L609.3 470.6 L610.3 473.9 L611.6 477.2 L612.8 480.4 L613.7 483.4 L613.9 486.4 L613.5 489.1 L619 488.8 L619.5 486.2 L619.2 483.3 L618.3 480.3 L616.9 477.1 L615.5 473.8 L614.3 470.5 L613.3 467.2 L612.4 463.7 L611.5 460.1 L610.7 456.4 L609.9 452.7 L609.1 449 L608.4 445.3 L608 441.7 L607.6 438 L607.2 434.3 L606.9 430.5 L606.5 426.6 L605.9 422.5 L605.3 418.1 L604.7 413.6 L604.1 409.1 L603.5 404.7 L603 400.6 L602.6 396.6 L602.2 392.6 L601.8 388.8 L601.5 385.3 L601.2 382.4 L601 380.1Z" fill="#000"/><path d="M603 379 L603.4 381.1 L603.9 383.9 L604.4 387.3 L604.9 391.2 L605.4 395.2 L606 399.2 L606.6 403.4 L607.3 407.9 L608 412.5 L608.7 417.1 L609.4 421.6 L610.1 425.9 L610.6 429.9 L611 433.7 L611.4 437.5 L611.9 441.2 L612.4 444.9 L613.1 448.6 L614 452.3 L614.9 456.1 L615.8 459.9 L616.7 463.6 L617.7 467.1 L618.7 470.5 L619.9 473.7 L621.4 477 L622.8 480.2 L623.6 483.3 L623.7 486.1 L622.8 488.7 L628.5 488.4 L629.2 485.9 L628.8 483.2 L627.5 480.2 L625.8 477 L623.9 473.7 L622.4 470.4 L621.1 467 L619.9 463.5 L618.8 459.8 L617.7 456 L616.6 452.1 L615.6 448.4 L614.7 444.6 L614 440.9 L613.4 437.2 L612.9 433.4 L612.4 429.6 L611.7 425.5 L610.9 421.3 L610.1 416.7 L609.2 412.1 L608.4 407.5 L607.5 403 L606.8 398.9 L606 394.9 L605.2 391 L604.5 387.3 L603.9 383.9 L603.4 381.1 L603 379Z" fill="#000"/><path d="M603 379 L603.4 381.1 L603.9 383.9 L604.5 387.3 L605.2 391 L606 394.9 L606.9 398.8 L607.9 402.9 L608.9 407.3 L609.8 411.9 L610.8 416.5 L611.8 421.1 L612.7 425.4 L613.4 429.4 L614.1 433.3 L614.7 437.1 L615.3 440.8 L616.1 444.5 L617.2 448.2 L618.3 452 L619.6 455.9 L620.8 459.7 L622.2 463.4 L623.6 467 L625.1 470.3 L626.9 473.6 L629.1 476.9 L631.1 480.1 L632.7 483.1 L633.4 485.8 L633 488.3 L638.8 488 L639 485.7 L637.9 483 L636 480 L633.5 476.9 L630.9 473.6 L628.8 470.3 L627 466.9 L625.3 463.3 L623.7 459.5 L622.2 455.7 L620.8 451.8 L619.4 448 L618.2 444.3 L617.2 440.5 L616.4 436.8 L615.6 433 L614.8 429.1 L613.9 425.1 L612.8 420.8 L611.6 416.3 L610.3 411.7 L609.1 407.2 L607.9 402.8 L606.9 398.8 L606 394.9 L605.2 391 L604.5 387.3 L603.9 383.9 L603.4 381.1 L603 379Z" fill="#000"/><path d="M603 379 L603.4 381.1 L603.9 383.9 L604.5 387.3 L605.2 391 L606 394.9 L606.9 398.8 L607.9 402.8 L609.1 407.2 L610.3 411.7 L611.6 416.3 L613 420.8 L614.3 425 L615.5 429 L616.4 432.9 L617.3 436.7 L618.3 440.4 L619.5 444.1 L620.8 447.9 L622.4 451.7 L624 455.6 L625.8 459.4 L627.6 463.2 L629.5 466.8 L631.6 470.2 L634.1 473.5 L637 476.8 L639.9 480 L642.3 482.9 L643.8 485.5 L644 487.8 L652 487.5 L651.2 485.3 L649 482.8 L645.9 479.9 L642.3 476.7 L638.7 473.4 L635.7 470.1 L633.2 466.7 L630.8 463.1 L628.6 459.3 L626.5 455.4 L624.5 451.5 L622.7 447.7 L621 444 L619.6 440.3 L618.3 436.5 L617 432.8 L615.7 429 L614.4 425 L613 420.8 L611.6 416.3 L610.3 411.7 L609.1 407.2 L607.9 402.8 L606.9 398.8 L606 394.9 L605.2 391 L604.5 387.3 L603.9 383.9 L603.4 381.1 L603 379Z" fill="#000"/><path d="M603 379 L603.4 381.1 L603.9 383.9 L604.5 387.3 L605.2 391 L606 394.9 L606.9 398.8 L607.9 402.8 L609.1 407.2 L610.3 411.7 L611.6 416.3 L613 420.8 L614.4 425 L615.7 429 L617 432.8 L618.4 436.5 L619.9 440.2 L621.6 443.9 L623.6 447.6 L625.7 451.5 L627.9 455.4 L630.3 459.2 L632.9 463 L635.7 466.7 L638.6 470.1 L642.2 473.4 L646.4 476.7 L650.7 479.8 L654.6 482.7 L657.5 485.2 L659 487.2 L672.6 486.6 L669.2 484.9 L664.4 482.5 L658.7 479.7 L652.8 476.6 L647.2 473.3 L642.5 470 L638.6 466.6 L635.1 463 L631.9 459.2 L628.9 455.3 L626.2 451.4 L623.8 447.6 L621.7 443.9 L619.9 440.2 L618.4 436.5 L617 432.8 L615.7 429 L614.4 425 L613 420.8 L611.6 416.3 L610.3 411.7 L609.1 407.2 L607.9 402.8 L606.9 398.8 L606 394.9 L605.2 391 L604.5 387.3 L603.9 383.9 L603.4 381.1 L603 379Z" fill="#000"/><clipPath id="cF"><path d="M383.9 498.6 L577 408 L576 394 L580 490.5Z"/></clipPath><g clip-path="url(#cF)" fill="#000"><path d="M383.9 500.6 L383.9 498.6 L383.9 498.6 L383.9 498.6 L383.9 498.6 L383.9 498.6 L383.9 498.6 L383.9 498.6 L383.9 498.6 L383.9 498.6 L383.9 498.6 L383.9 498.6 L383.9 498.6 L383.9 498.6 L407 487.7 L405.6 488.5 L404.1 489.3 L402.8 490.2 L401.5 491 L400.2 491.9 L399 492.7 L397.9 493.6 L396.8 494.5 L395.8 495.4 L394.8 496.3 L393.9 497.3 L393.1 498.2 L393.1 500.2Z"/><path d="M402.2 499.8 L402.2 497.8 L403.9 495.9 L405.7 494.1 L407.6 492.2 L409.6 490.4 L411.7 488.7 L414 486.9 L416.4 485.2 L418.8 483.5 L421.4 481.8 L424.2 480.2 L427 478.6 L429.9 477 L447 469 L443.3 471.2 L439.7 473.3 L436.3 475.6 L433 477.9 L429.9 480.2 L426.9 482.5 L424 484.9 L421.3 487.3 L418.8 489.8 L416.4 492.3 L414.1 494.8 L412 497.4 L412 499.4Z"/><path d="M420.4 499.1 L420.4 497.1 L422.5 494.2 L424.8 491.3 L427.2 488.5 L429.7 485.7 L432.4 483 L435.3 480.3 L438.3 477.6 L441.4 475 L444.7 472.5 L448.1 470 L451.7 467.5 L455.4 465.1 L464.6 460.8 L460.9 463.5 L457.3 466.2 L453.9 469.1 L450.6 471.9 L447.5 474.9 L444.5 477.8 L441.6 480.8 L438.9 483.9 L436.4 487 L434 490.2 L431.7 493.4 L429.6 496.7 L429.6 498.7Z"/><path d="M438 498.4 L438 496.4 L440.1 492.8 L442.4 489.2 L444.8 485.7 L447.3 482.3 L450 478.9 L452.9 475.6 L455.9 472.3 L459 469.1 L462.3 466 L465.7 462.9 L469.3 459.8 L473 456.8 L482.8 452.2 L479.1 455.5 L475.5 458.9 L472.1 462.3 L468.8 465.8 L465.7 469.4 L462.7 473 L459.8 476.7 L457.1 480.4 L454.6 484.2 L452.2 488.1 L449.9 492 L447.8 495.9 L447.8 497.9Z"/><path d="M455.6 497.6 L455.6 495.6 L457.7 491.3 L460 487.1 L462.4 483 L464.9 478.9 L467.6 474.9 L470.5 470.9 L473.5 467 L476.6 463.2 L479.9 459.4 L483.3 455.7 L486.9 452.1 L490.6 448.6 L499.8 444.2 L496.1 448.1 L492.5 452 L489.1 456 L485.8 460.1 L482.7 464.3 L479.7 468.5 L476.8 472.8 L474.1 477.1 L471.6 481.5 L469.2 486 L466.9 490.6 L464.8 495.2 L464.8 497.2Z"/><path d="M473.2 496.9 L473.2 494.9 L475.3 489.9 L477.6 485 L480 480.2 L482.5 475.5 L485.2 470.8 L488.1 466.2 L491.1 461.7 L494.2 457.3 L497.5 452.9 L500.9 448.6 L504.5 444.4 L508.2 440.3 L516.8 436.3 L513.2 440.7 L509.8 445.2 L506.5 449.7 L503.3 454.4 L500.3 459.1 L497.4 463.9 L494.6 468.8 L492 473.8 L489.6 478.8 L487.2 484 L485 489.2 L483 494.5 L483 496.5Z"/><path d="M491.5 496.1 L491.5 494.1 L493.4 488.6 L495.5 483.1 L497.7 477.8 L500 472.5 L502.4 467.3 L505 462.2 L507.7 457.1 L510.6 452.2 L513.6 447.3 L516.7 442.5 L519.9 437.8 L523.3 433.2 L530.3 429.9 L527.2 434.8 L524.2 439.7 L521.3 444.7 L518.5 449.8 L515.8 455 L513.3 460.2 L510.9 465.6 L508.6 471.1 L506.4 476.6 L504.4 482.2 L502.5 487.9 L500.7 493.8 L500.7 495.8Z"/><path d="M509 495.4 L509 493.4 L510.7 487.4 L512.5 481.4 L514.4 475.5 L516.4 469.8 L518.5 464.1 L520.8 458.5 L523.1 453 L525.6 447.6 L528.2 442.3 L530.9 437.1 L533.7 432 L536.7 426.9 L544.2 423.4 L541.5 428.7 L538.9 434.1 L536.4 439.5 L534 445.1 L531.7 450.7 L529.6 456.5 L527.5 462.3 L525.6 468.3 L523.7 474.3 L522 480.4 L520.3 486.7 L518.8 493 L518.8 495Z"/><path d="M527.3 494.6 L527.3 492.6 L528.7 486.1 L530.2 479.6 L531.8 473.2 L533.5 467 L535.3 460.8 L537.2 454.7 L539.2 448.7 L541.3 442.9 L543.5 437.1 L545.8 431.4 L548.2 425.9 L550.7 420.4 L557.7 417.1 L555.4 422.8 L553.3 428.6 L551.2 434.5 L549.2 440.5 L547.3 446.6 L545.5 452.8 L543.8 459.1 L542.2 465.5 L540.6 472.1 L539.1 478.7 L537.8 485.4 L536.5 492.3 L536.5 494.3Z"/><path d="M545 493.9 L545 491.9 L546.2 484.8 L547.4 477.9 L548.7 471 L550.1 464.2 L551.6 457.6 L553.2 451 L554.8 444.6 L556.5 438.3 L558.3 432.1 L560.2 425.9 L562.1 419.9 L564.2 414 L569.8 411.4 L568.2 417.5 L566.7 423.6 L565.2 429.9 L563.8 436.3 L562.5 442.8 L561.2 449.5 L560 456.2 L558.8 463 L557.7 470 L556.7 477 L555.7 484.2 L554.8 491.5 L554.8 493.5Z"/><path d="M562.5 493.2 L562.5 491.2 L563.1 483.8 L563.8 476.5 L564.5 469.4 L565.2 462.3 L566 455.4 L566.8 448.6 L567.7 441.9 L568.6 435.3 L569.6 428.8 L570.6 422.5 L571.6 416.2 L572.7 410.1 L576.1 408.4 L575.7 414.7 L575.2 421 L574.8 427.5 L574.4 434.1 L574 440.8 L573.6 447.6 L573.2 454.5 L572.9 461.5 L572.6 468.7 L572.3 475.9 L572 483.3 L571.7 490.8 L571.7 492.8Z"/></g><g fill="#000"><path d="M383.9 498.6 L576 393.1 L576 395Z"/><path d="M383.9 498.6 L576 397.7 L576 399.6Z"/><path d="M383.9 498.6 L576 402.7 L576 404.5Z"/><path d="M383.9 498.6 L576 407.4 L576 408.5Z"/></g></svg><!--/ART-->
  <!--DOCK--><div class="abs" style="left:1441px;top:98px;width:17px;height:840px;background:#4b4b4b"></div>
  <svg class="abs" style="left:1445px;top:103px" width="9" height="6" viewBox="0 0 9 6"><path d="M1 5 L4.500 1.500 L8 5" fill="none" stroke="#a4a4a4" stroke-width="1.700"/></svg>
  <svg class="abs" style="left:1445px;top:927px" width="9" height="6" viewBox="0 0 9 6"><path d="M1 1 L4.500 4.500 L8 1" fill="none" stroke="#a4a4a4" stroke-width="1.700"/></svg>
  <div class="abs" style="left:1443px;top:507px;width:15px;height:25px;border-radius:7.500px;background:#606060"></div>
  <div class="abs" style="left:78px;top:937px;width:1380px;height:18px;background:#535353;border-top:1px solid #4a4a4a"></div>
  <div class="abs" style="left:511px;top:938px;width:947px;height:17px;background:#4b4b4b"></div>
  <div class="abs" style="left:80px;top:939px;width:52px;height:15px;background:#474747"></div>
  <div class="abs" style="left:84px;top:942px;font-size:11px;color:#f0f0f0;font-family:'Liberation Mono',monospace;letter-spacing:-.6px">66.67%</div>
  <svg class="abs" style="left:135px;top:944px" width="9" height="6" viewBox="0 0 9 6"><path d="M1 1 L4.500 4.500 L8 1" fill="none" stroke="#e4e4e4" stroke-width="1.600"/></svg>
  <svg class="abs" style="left:157px;top:942px" width="30" height="10" viewBox="0 0 30 10"><g fill="#7a7a7a"><rect x="1" y="1" width="1.500" height="8"/><path d="M9 1 V9 L3.500 5 Z M27 1 V9 L21.500 5 Z"/></g></svg>
  <div class="abs" style="left:190px;top:939px;width:42px;height:15px;background:#474747"></div>
  <div class="abs" style="left:194px;top:942px;font-size:11px;color:#f0f0f0;font-family:'Liberation Mono',monospace">1</div>
  <svg class="abs" style="left:235px;top:944px" width="9" height="6" viewBox="0 0 9 6"><path d="M1 1 L4.500 4.500 L8 1" fill="none" stroke="#e4e4e4" stroke-width="1.600"/></svg>
  <svg class="abs" style="left:256px;top:942px" width="30" height="10" viewBox="0 0 30 10"><g fill="#7a7a7a"><path d="M3 1 V9 L8.500 5 Z M20 1 V9 L25.500 5 Z"/><rect x="26.500" y="1" width="1.500" height="8"/></g></svg>
  <div class="abs" style="left:292px;top:938px;width:1px;height:17px;background:#474747"></div>
  <div class="abs" style="left:380px;top:942px;font-size:12px;color:#dadada">选择</div>
  <svg class="abs" style="left:497px;top:942px" width="7" height="10" viewBox="0 0 7 10"><path d="M1 0.500 V9.500 L6.500 5 Z" fill="#e4e4e4"/></svg>
  <div class="abs" style="left:509px;top:938px;width:1px;height:17px;background:#474747"></div>
  <svg class="abs" style="left:514px;top:941px" width="6" height="10" viewBox="0 0 6 10"><path d="M5 1 L1.500 5 L5 9" fill="none" stroke="#b0b0b0" stroke-width="1.500"/></svg>
  <svg class="abs" style="left:1430px;top:942px" width="6" height="10" viewBox="0 0 6 10"><path d="M1 1 L4.500 5 L1 9" fill="none" stroke="#b0b0b0" stroke-width="1.500"/></svg>
  <div class="abs" style="left:981px;top:939px;width:25px;height:15px;border-radius:7.500px;background:#606060"></div>
  <div class="abs" style="left:1458px;top:69px;width:3px;height:886px;background:#3c3c3c"></div>
  <div class="abs" style="left:1461px;top:69px;width:283px;height:12px;background:#424242"></div>
  <svg class="abs" style="left:1485px;top:72px" width="8" height="6" viewBox="0 0 8 6"><path d="M3.500 0 L0.500 3 L3.500 6 Z M7.500 0 L4.500 3 L7.500 6 Z" fill="#e0e0e0"/></svg>
  <svg class="abs" style="left:1733px;top:72px" width="8" height="6" viewBox="0 0 8 6"><path d="M0.500 0 L3.500 3 L0.500 6 Z M4.500 0 L7.500 3 L4.500 6 Z" fill="#e0e0e0"/></svg>
  <div class="abs" style="left:1746px;top:35px;width:2px;height:923px;background:#3c3c3c;z-index:40"></div>
  <div class="abs" style="left:1461px;top:81px;width:38px;height:874px;background:#4f4f4f"></div>
  <div class="abs" style="left:1499px;top:81px;width:2px;height:874px;background:#3c3c3c"></div>
  <div class="abs" style="left:1461px;top:81px;width:38px;height:67px;background:#535353"></div>
  <div class="abs" style="left:1461px;top:148px;width:38px;height:2px;background:#3c3c3c"></div>
  <div class="abs" style="left:1470px;top:82px;width:20px;height:6px;background:repeating-linear-gradient(90deg,#3a3a3a 0 1px,transparent 1px 2px)"></div>
  <div class="abs" style="left:1461px;top:150px;width:38px;height:67px;background:#535353"></div>
  <div class="abs" style="left:1461px;top:217px;width:38px;height:2px;background:#3c3c3c"></div>
  <div class="abs" style="left:1470px;top:151px;width:20px;height:6px;background:repeating-linear-gradient(90deg,#3a3a3a 0 1px,transparent 1px 2px)"></div>
  <div class="abs" style="left:1461px;top:219px;width:38px;height:68px;background:#535353"></div>
  <div class="abs" style="left:1461px;top:287px;width:38px;height:2px;background:#3c3c3c"></div>
  <div class="abs" style="left:1470px;top:220px;width:20px;height:6px;background:repeating-linear-gradient(90deg,#3a3a3a 0 1px,transparent 1px 2px)"></div>
  <div class="abs" style="left:1461px;top:289px;width:38px;height:67px;background:#535353"></div>
  <div class="abs" style="left:1461px;top:356px;width:38px;height:2px;background:#3c3c3c"></div>
  <div class="abs" style="left:1470px;top:290px;width:20px;height:6px;background:repeating-linear-gradient(90deg,#3a3a3a 0 1px,transparent 1px 2px)"></div>
  <div class="abs" style="left:1461px;top:358px;width:38px;height:38px;background:#535353"></div>
  <div class="abs" style="left:1461px;top:396px;width:38px;height:2px;background:#3c3c3c"></div>
  <div class="abs" style="left:1470px;top:359px;width:20px;height:6px;background:repeating-linear-gradient(90deg,#3a3a3a 0 1px,transparent 1px 2px)"></div>
  <div class="abs" style="left:1461px;top:398px;width:38px;height:40px;background:#535353"></div>
  <div class="abs" style="left:1461px;top:438px;width:38px;height:2px;background:#3c3c3c"></div>
  <div class="abs" style="left:1470px;top:399px;width:20px;height:6px;background:repeating-linear-gradient(90deg,#3a3a3a 0 1px,transparent 1px 2px)"></div>
  <div class="abs" style="left:1466px;top:162px;width:28px;height:22px;background:#2e2e2e;border-radius:2px"></div>
  <svg class="abs" style="left:1468px;top:92px" width="24" height="24" viewBox="0 0 24 24"><circle cx="12" cy="12" r="5.800" fill="#d2d2d2"/><circle cx="12" cy="12" r="8" fill="none" stroke="#d2d2d2" stroke-width="1.300" stroke-dasharray="2.600 1.600"/></svg>
  <svg class="abs" style="left:1468px;top:120px" width="24" height="24" viewBox="0 0 24 24"><defs><linearGradient id="dg1" x1="0" y1="1" x2="1" y2="0"><stop offset="0" stop-color="#7a7a7a"/><stop offset="1" stop-color="#e0e0e0"/></linearGradient></defs><path d="M5 4 A15 15 0 0 1 20 19 H5 Z" fill="url(#dg1)" stroke="#d2d2d2" stroke-width="1.200"/></svg>
  <svg class="abs" style="left:1468px;top:161px" width="24" height="24" viewBox="0 0 24 24"><rect x="4" y="3" width="1.600" height="18" fill="#d2d2d2"/><rect x="7" y="5" width="8" height="6" fill="#d2d2d2"/><rect x="7" y="13" width="13" height="6" fill="#d2d2d2"/></svg>
  <svg class="abs" style="left:1468px;top:189px" width="24" height="24" viewBox="0 0 24 24"><rect x="4.600" y="4.600" width="8" height="8" fill="#8a8a8a" stroke="#d2d2d2" stroke-width="1.200"/><rect x="11" y="11" width="9" height="9" fill="#d2d2d2"/><rect x="9.600" y="9.600" width="5" height="5" fill="#8a8a8a" stroke="#d2d2d2" stroke-width="1.200"/></svg>
  <svg class="abs" style="left:1468px;top:230px" width="24" height="24" viewBox="0 0 24 24"><path d="M7 12 H17 L16 22 H8 Z" fill="#d2d2d2"/><path d="M9 12 L7 5 M12 12 L12 2 M15 12 L18 5" stroke="#d2d2d2" stroke-width="2.200"/><circle cx="7" cy="5" r="2" fill="#d2d2d2"/><circle cx="12" cy="3.500" r="2.200" fill="#d2d2d2"/><circle cx="18" cy="5.500" r="2" fill="#d2d2d2"/></svg>
  <svg class="abs" style="left:1468px;top:258px" width="24" height="24" viewBox="0 0 24 24"><circle cx="12" cy="7.500" r="4.300" fill="#d2d2d2"/><circle cx="7.500" cy="13.500" r="4.300" fill="#d2d2d2"/><circle cx="16.500" cy="13.500" r="4.300" fill="#d2d2d2"/><path d="M12 12 L10 22 H14 Z" fill="#d2d2d2"/></svg>
  <svg class="abs" style="left:1468px;top:298px" width="24" height="24" viewBox="0 0 24 24"><text x="10" y="14" font-family="Liberation Sans,sans-serif" font-weight="bold" font-size="15" fill="#d2d2d2">A</text><rect x="3.500" y="13.500" width="6" height="6" fill="#535353" stroke="#d2d2d2" stroke-width="1.200"/><rect x="6.500" y="16.500" width="5" height="5" fill="#535353" stroke="#d2d2d2" stroke-width="1.200"/></svg>
  <svg class="abs" style="left:1468px;top:327px" width="24" height="24" viewBox="0 0 24 24"><path d="M13 3 H21 V5 H19.500 V17 H17.500 V5 H16 V17 H14 V11 A4 4 0 0 1 13 3 Z" fill="#d2d2d2"/><rect x="3.500" y="11.500" width="6" height="6" fill="#535353" stroke="#d2d2d2" stroke-width="1.200"/><rect x="6.500" y="14.500" width="5" height="5" fill="#535353" stroke="#d2d2d2" stroke-width="1.200"/></svg>
  <svg class="abs" style="left:1468px;top:368px" width="24" height="24" viewBox="0 0 24 24"><text x="3" y="19" font-family="Liberation Serif,serif" font-style="italic" font-weight="bold" font-size="22" fill="#d2d2d2">A</text></svg>
  <svg class="abs" style="left:1468px;top:409px" width="24" height="24" viewBox="0 0 24 24"><path d="M10 4.500 H4.500 V20.500 H19.500 V14" fill="none" stroke="#d2d2d2" stroke-width="1.800"/><path d="M11 13 L20 4 M13.500 3.500 H20.500 V10.500" fill="none" stroke="#d2d2d2" stroke-width="1.800"/></svg><!--/DOCK-->
  <!--PANELS--><div class="abs" style="left:1501px;top:81px;width:243px;height:874px;background:#3c3c3c"></div>
  <div class="abs" style="left:1501px;top:81px;width:243px;height:181px;background:#535353"></div>
  <div class="abs" style="left:1501px;top:81px;width:243px;height:26px;background:#454545"></div>
  <div class="abs" style="left:1503px;top:81px;width:41px;height:26px;background:#494949;border-right:1px solid #3e3e3e"></div>
  <div class="abs" style="left:1511px;top:89px;font-size:12.500px;color:#a6a6a6;white-space:nowrap">画板</div>
  <div class="abs" style="left:1544px;top:81px;width:42px;height:26px;background:#494949;border-right:1px solid #3e3e3e"></div>
  <div class="abs" style="left:1552px;top:89px;font-size:12.500px;color:#a6a6a6;white-space:nowrap">链接</div>
  <div class="abs" style="left:1586px;top:81px;width:42px;height:26px;background:#535353;border-right:1px solid #3e3e3e"></div>
  <div class="abs" style="left:1594px;top:89px;font-size:12.500px;color:#f2f2f2;white-space:nowrap">图层</div>
  <svg class="abs" style="left:1729px;top:91px" width="11" height="7" viewBox="0 0 11 7" shape-rendering="crispEdges"><g fill="#d4d4d4"><rect y="0" width="11" height="1"/><rect y="2" width="11" height="1"/><rect y="4" width="11" height="1"/><rect y="6" width="11" height="1"/></g></svg>
  <div class="abs" style="left:1506px;top:113px;width:236px;height:129px;border:1px solid #484848;background:#515151"></div>
  <div class="abs" style="left:1507px;top:114px;width:234px;height:21px;background:#4c6a96"></div>
  <svg class="abs" style="left:1509px;top:118px" width="15" height="11" viewBox="0 0 15 11"><path d="M0.500 5.500 C3 1 12 1 14.500 5.500 C12 10 3 10 0.500 5.500 Z" fill="#e8e8e8"/><circle cx="7.500" cy="5.500" r="2.800" fill="#4c6a96"/><circle cx="7.500" cy="5.500" r="1.400" fill="#e8e8e8"/></svg>
  <div class="abs" style="left:1550px;top:114px;width:3px;height:21px;background:#4f80ff"></div>
  <svg class="abs" style="left:1560px;top:120px" width="6" height="10" viewBox="0 0 6 10"><path d="M1 1 L4.500 5 L1 9" fill="none" stroke="#f0f0f0" stroke-width="1.600"/></svg>
  <div class="abs" style="left:1579px;top:116px;width:18px;height:18px;background:#fff;border:1px solid #111"></div>
  <div class="abs" style="left:1583px;top:124px;width:3px;height:2px;background:#555"></div><div class="abs" style="left:1589px;top:122px;width:5px;height:4px;background:#8a7a70"></div>
  <div class="abs" style="left:1602px;top:120px;font-size:12px;color:#f4f4f4;white-space:nowrap">图层 <span style="font-family:'Liberation Mono',monospace;font-size:11px">1</span></div>
  <div class="abs" style="left:1711px;top:121px;width:8px;height:8px;border:1.300px solid #e0e0e0;border-radius:4px"></div>
  <svg class="abs" style="left:1735px;top:114px" width="6" height="6" viewBox="0 0 6 6"><path d="M0 0 H6 V6 Z" fill="#e0e0e0"/></svg>
  <div class="abs" style="left:1507px;top:247px;font-size:12px;color:#d4d4d4;white-space:nowrap"><span style="font-family:'Liberation Mono',monospace;font-size:11px">1</span> 个图层</div>
  <svg class="abs" style="left:1602px;top:245px" width="14" height="13" viewBox="0 0 14 13"><circle cx="8" cy="5" r="3.800" fill="none" stroke="#6a6a6a" stroke-width="1.400"/><path d="M5 8 L1.500 11.500" stroke="#6a6a6a" stroke-width="1.800"/></svg>
  <svg class="abs" style="left:1627px;top:245px" width="13" height="13" viewBox="0 0 13 13"><rect x="1.500" y="1.500" width="10" height="10" fill="none" stroke="#6a6a6a" stroke-width="1.200" stroke-dasharray="2 1"/><rect x="4" y="4" width="5" height="5" fill="#6a6a6a"/></svg>
  <svg class="abs" style="left:1652px;top:245px" width="16" height="13" viewBox="0 0 16 13"><path d="M1 2 V7 H5 M3.500 5 L5.500 7 L3.500 9" fill="none" stroke="#e0e0e0" stroke-width="1.300"/><path d="M7 3 H15 V12 H10 Z" fill="#e0e0e0"/></svg>
  <svg class="abs" style="left:1681px;top:245px" width="12" height="13" viewBox="0 0 12 13"><path d="M1 1 H11 V12 H5 L1 8 Z" fill="#e0e0e0"/><path d="M1 8 H5 V12" fill="#535353"/></svg>
  <svg class="abs" style="left:1706px;top:244px" width="12" height="14" viewBox="0 0 12 14"><path d="M1 3 H11 M4 3 V1.500 H8 V3 M2 3 L2.800 13 H9.200 L10 3 M4.500 5 V11 M6 5 V11 M7.500 5 V11" fill="none" stroke="#686868" stroke-width="1.100"/></svg>
  <div class="abs" style="left:1501px;top:264px;width:243px;height:344px;background:#535353"></div>
  <div class="abs" style="left:1501px;top:264px;width:243px;height:26px;background:#454545"></div>
  <div class="abs" style="left:1503px;top:264px;width:45px;height:26px;background:#535353;border-right:1px solid #3e3e3e"></div>
  <div class="abs" style="left:1517px;top:272px;font-size:12.500px;color:#f2f2f2;white-space:nowrap">描边</div>
  <svg class="abs" style="left:1507px;top:273px" width="6" height="10" viewBox="0 0 6 10"><path d="M0.800 3.600 L3 1.300 L5.200 3.600 M0.800 6.400 L3 8.700 L5.200 6.400" fill="none" stroke="#d0d0d0" stroke-width="1.100"/></svg>
  <div class="abs" style="left:1548px;top:264px;width:42px;height:26px;background:#494949;border-right:1px solid #3e3e3e"></div>
  <div class="abs" style="left:1557px;top:272px;font-size:12.500px;color:#a6a6a6;white-space:nowrap">色板</div>
  <div class="abs" style="left:1590px;top:264px;width:67px;height:26px;background:#494949;border-right:1px solid #3e3e3e"></div>
  <div class="abs" style="left:1599px;top:272px;font-size:12.500px;color:#a6a6a6;white-space:nowrap">图形样式</div>
  <svg class="abs" style="left:1729px;top:274px" width="11" height="7" viewBox="0 0 11 7" shape-rendering="crispEdges"><g fill="#d4d4d4"><rect y="0" width="11" height="1"/><rect y="2" width="11" height="1"/><rect y="4" width="11" height="1"/><rect y="6" width="11" height="1"/></g></svg>
  <div class="abs" style="left:1483px;top:303px;width:80px;text-align:right;font-size:12px;color:#e6e6e6;white-space:nowrap">粗细 :</div>
  <div class="abs" style="left:1566px;top:297px;width:88px;height:21px;background:#464646;border:1px solid #5e5e5e"></div>
  <svg class="abs" style="left:1570px;top:300px" width="10" height="15" viewBox="0 0 10 15"><path d="M1.500 5 L5 1.500 L8.500 5 M1.500 10 L5 13.500 L8.500 10" fill="none" stroke="#e4e4e4" stroke-width="1.500"/></svg>
  <div class="abs" style="left:1583px;top:298px;width:1px;height:19px;background:#5e5e5e"></div><div class="abs" style="left:1635px;top:298px;width:1px;height:19px;background:#5e5e5e"></div>
  <svg class="abs" style="left:1639px;top:305px" width="9" height="6" viewBox="0 0 9 6"><path d="M1 1 L4.500 4.500 L8 1" fill="none" stroke="#e4e4e4" stroke-width="1.600"/></svg>
  <div class="abs" style="left:1483px;top:329px;width:80px;text-align:right;font-size:12px;color:#757575;white-space:nowrap">端点 :</div>
  <div class="abs" style="left:1567px;top:324px;width:23px;height:20px;border:1px solid #5e5e5e"></div>
  <div class="abs" style="left:1573px;top:329px;width:12px;height:10px;background:#6e6e6e"></div>
  <div class="abs" style="left:1579px;top:334px;width:6px;height:5px;background:#535353"></div>
  <div class="abs" style="left:1589px;top:324px;width:23px;height:20px;border:1px solid #5e5e5e"></div>
  <div class="abs" style="left:1595px;top:329px;width:12px;height:10px;background:#6e6e6e"></div>
  <div class="abs" style="left:1601px;top:334px;width:6px;height:5px;background:#535353"></div>
  <div class="abs" style="left:1611px;top:324px;width:23px;height:20px;border:1px solid #5e5e5e"></div>
  <div class="abs" style="left:1617px;top:329px;width:12px;height:10px;background:#6e6e6e"></div>
  <div class="abs" style="left:1623px;top:334px;width:6px;height:5px;background:#535353"></div>
  <div class="abs" style="left:1483px;top:356px;width:80px;text-align:right;font-size:12px;color:#757575;white-space:nowrap">边角 :</div>
  <div class="abs" style="left:1567px;top:351px;width:23px;height:20px;border:1px solid #5e5e5e"></div>
  <div class="abs" style="left:1573px;top:356px;width:12px;height:10px;background:#6e6e6e"></div>
  <div class="abs" style="left:1579px;top:361px;width:6px;height:5px;background:#535353"></div>
  <div class="abs" style="left:1589px;top:351px;width:23px;height:20px;border:1px solid #5e5e5e"></div>
  <div class="abs" style="left:1595px;top:356px;width:12px;height:10px;background:#6e6e6e"></div>
  <div class="abs" style="left:1601px;top:361px;width:6px;height:5px;background:#535353"></div>
  <div class="abs" style="left:1611px;top:351px;width:23px;height:20px;border:1px solid #5e5e5e"></div>
  <div class="abs" style="left:1617px;top:356px;width:12px;height:10px;background:#6e6e6e"></div>
  <div class="abs" style="left:1623px;top:361px;width:6px;height:5px;background:#535353"></div>
  <div class="abs" style="left:1657px;top:355px;font-size:12px;color:#757575;white-space:nowrap">限制 :</div>
  <div class="abs" style="left:1693px;top:351px;width:38px;height:20px;background:#5a5a5a"></div>
  <div class="abs" style="left:1734px;top:357px;font-size:9px;color:#757575">x</div>
  <div class="abs" style="left:1483px;top:383px;width:80px;text-align:right;font-size:12px;color:#757575;white-space:nowrap">对齐描边 :</div>
  <div class="abs" style="left:1567px;top:378px;width:23px;height:20px;border:1px solid #5e5e5e"></div>
  <div class="abs" style="left:1573px;top:383px;width:12px;height:10px;background:#6e6e6e"></div>
  <div class="abs" style="left:1579px;top:388px;width:6px;height:5px;background:#535353"></div>
  <div class="abs" style="left:1589px;top:378px;width:23px;height:20px;border:1px solid #5e5e5e"></div>
  <div class="abs" style="left:1595px;top:383px;width:12px;height:10px;background:#6e6e6e"></div>
  <div class="abs" style="left:1601px;top:388px;width:6px;height:5px;background:#535353"></div>
  <div class="abs" style="left:1611px;top:378px;width:23px;height:20px;border:1px solid #5e5e5e"></div>
  <div class="abs" style="left:1617px;top:383px;width:12px;height:10px;background:#6e6e6e"></div>
  <div class="abs" style="left:1623px;top:388px;width:6px;height:5px;background:#535353"></div>
  <div class="abs" style="left:1507px;top:404px;width:234px;height:1px;background:#494949"></div>
  <div class="abs" style="left:1507px;top:416px;width:11px;height:11px;background:#e8e8e8;border-radius:2px"></div><div class="abs" style="left:1510px;top:421px;width:5px;height:2px;background:#333"></div>
  <div class="abs" style="left:1523px;top:416px;font-size:12px;color:#f4f4f4;font-weight:bold;white-space:nowrap">虚线</div>
  <div class="abs" style="left:1665px;top:412px;width:38px;height:20px;border:1px solid #5e5e5e"></div>
  <svg class="abs" style="left:1669px;top:416px" width="30" height="12" viewBox="0 0 30 12"><rect x="1" y="1" width="28" height="10" fill="none" stroke="#7a7a7a" stroke-width="1.400" stroke-dasharray="6 3"/></svg>
  <div class="abs" style="left:1703px;top:412px;width:38px;height:20px;border:1px solid #5e5e5e"></div>
  <svg class="abs" style="left:1707px;top:416px" width="30" height="12" viewBox="0 0 30 12"><rect x="1" y="1" width="28" height="10" fill="none" stroke="#7a7a7a" stroke-width="1.400" stroke-dasharray="6 3"/></svg>
  <div class="abs" style="left:1507.0px;top:440px;width:35px;height:18px;background:#585858"></div>
  <div class="abs" style="left:1507.0px;top:461px;width:35px;text-align:center;font-size:11.500px;color:#6e6e6e;white-space:nowrap">虚线</div>
  <div class="abs" style="left:1546.5px;top:440px;width:35px;height:18px;background:#585858"></div>
  <div class="abs" style="left:1546.5px;top:461px;width:35px;text-align:center;font-size:11.500px;color:#6e6e6e;white-space:nowrap">间隙</div>
  <div class="abs" style="left:1586.0px;top:440px;width:35px;height:18px;background:#585858"></div>
  <div class="abs" style="left:1586.0px;top:461px;width:35px;text-align:center;font-size:11.500px;color:#6e6e6e;white-space:nowrap">虚线</div>
  <div class="abs" style="left:1625.5px;top:440px;width:35px;height:18px;background:#585858"></div>
  <div class="abs" style="left:1625.5px;top:461px;width:35px;text-align:center;font-size:11.500px;color:#6e6e6e;white-space:nowrap">间隙</div>
  <div class="abs" style="left:1665.0px;top:440px;width:35px;height:18px;background:#585858"></div>
  <div class="abs" style="left:1665.0px;top:461px;width:35px;text-align:center;font-size:11.500px;color:#6e6e6e;white-space:nowrap">虚线</div>
  <div class="abs" style="left:1704.5px;top:440px;width:35px;height:18px;background:#585858"></div>
  <div class="abs" style="left:1704.5px;top:461px;width:35px;text-align:center;font-size:11.500px;color:#6e6e6e;white-space:nowrap">间隙</div>
  <div class="abs" style="left:1507px;top:479px;width:234px;height:1px;background:#494949"></div>
  <div class="abs" style="left:1483px;top:492px;width:80px;text-align:right;font-size:12px;color:#757575;white-space:nowrap">箭头 :</div>
  <div class="abs" style="left:1566px;top:486px;width:38px;height:21px;background:#808080"></div>
  <div class="abs" style="left:1604px;top:486px;width:18px;height:21px;border:1px solid #5c5c5c"></div>
  <svg class="abs" style="left:1609px;top:494px" width="9" height="6" viewBox="0 0 9 6"><path d="M1 1 L4.500 4.500 L8 1" fill="none" stroke="#707070" stroke-width="1.500"/></svg>
  <div class="abs" style="left:1629px;top:486px;width:38px;height:21px;background:#808080"></div>
  <div class="abs" style="left:1667px;top:486px;width:18px;height:21px;border:1px solid #5c5c5c"></div>
  <svg class="abs" style="left:1672px;top:494px" width="9" height="6" viewBox="0 0 9 6"><path d="M1 1 L4.500 4.500 L8 1" fill="none" stroke="#707070" stroke-width="1.500"/></svg>
  <svg class="abs" style="left:1721px;top:491px" width="14" height="12" viewBox="0 0 14 12"><path d="M1 3.500 H12 M9 0.500 L12.500 3.500 L9 6.500 M13 8.500 H2 M5 5.500 L1.500 8.500 L5 11.500" fill="none" stroke="#7a7a7a" stroke-width="1.400"/></svg>
  <div class="abs" style="left:1483px;top:521px;width:80px;text-align:right;font-size:12px;color:#757575;white-space:nowrap">缩放 :</div>
  <div class="abs" style="left:1566px;top:516px;width:57px;height:21px;border:1px solid #5c5c5c;background:#505050"></div>
  <svg class="abs" style="left:1569px;top:519px" width="10" height="15" viewBox="0 0 10 15"><path d="M1.500 5 L5 1.500 L8.500 5 M1.500 10 L5 13.500 L8.500 10" fill="none" stroke="#6a6a6a" stroke-width="1.400"/></svg>
  <div class="abs" style="left:1585px;top:520px;font-size:11px;color:#777">100%</div>
  <div class="abs" style="left:1629px;top:516px;width:57px;height:21px;border:1px solid #5c5c5c;background:#505050"></div>
  <svg class="abs" style="left:1632px;top:519px" width="10" height="15" viewBox="0 0 10 15"><path d="M1.500 5 L5 1.500 L8.500 5 M1.500 10 L5 13.500 L8.500 10" fill="none" stroke="#6a6a6a" stroke-width="1.400"/></svg>
  <div class="abs" style="left:1648px;top:520px;font-size:11px;color:#777">100%</div>
  <svg class="abs" style="left:1721px;top:518px" width="14" height="17" viewBox="0 0 14 17"><path d="M4 6 V4 A3 3 0 0 1 10 4 V6 M4 10 V12 A3 3 0 0 0 10 12 V10 M2 1 L12 16" fill="none" stroke="#7a7a7a" stroke-width="1.400"/></svg>
  <div class="abs" style="left:1483px;top:551px;width:80px;text-align:right;font-size:12px;color:#757575;white-space:nowrap">对齐 :</div>
  <div class="abs" style="left:1567px;top:546px;width:23px;height:20px;border:1px solid #5e5e5e"></div>
  <svg class="abs" style="left:1571px;top:551px" width="15" height="10" viewBox="0 0 15 10"><path d="M1 5 H12 M9 2 L12 5 L9 8" fill="none" stroke="#7a7a7a" stroke-width="1.300"/></svg>
  <div class="abs" style="left:1589px;top:546px;width:23px;height:20px;border:1px solid #5e5e5e"></div>
  <svg class="abs" style="left:1593px;top:551px" width="15" height="10" viewBox="0 0 15 10"><path d="M1 5 H12 M9 2 L12 5 L9 8" fill="none" stroke="#7a7a7a" stroke-width="1.300"/></svg>
  <div class="abs" style="left:1507px;top:572px;width:234px;height:1px;background:#494949"></div>
  <div class="abs" style="left:1483px;top:586px;width:80px;text-align:right;font-size:12px;color:#757575;white-space:nowrap">配置文件 :</div>
  <div class="abs" style="left:1566px;top:580px;width:88px;height:21px;background:#808080"></div>
  <div class="abs" style="left:1654px;top:580px;width:18px;height:21px;border:1px solid #5c5c5c"></div>
  <svg class="abs" style="left:1659px;top:588px" width="9" height="6" viewBox="0 0 9 6"><path d="M1 1 L4.500 4.500 L8 1" fill="none" stroke="#707070" stroke-width="1.500"/></svg>
  <svg class="abs" style="left:1696px;top:584px" width="16" height="13" viewBox="0 0 16 13"><path d="M8 0 V13" stroke="#707070"/><path d="M1 2 L6 6.500 L1 11 Z M15 2 L10 6.500 L15 11 Z" fill="#707070"/></svg>
  <svg class="abs" style="left:1722px;top:583px" width="13" height="16" viewBox="0 0 13 16"><path d="M0 8 H13" stroke="#707070"/><path d="M2 1 L6.500 6 L11 1 Z M2 15 L6.500 10 L11 15 Z" fill="#707070"/></svg>
  <div class="abs" style="left:1501px;top:611px;width:243px;height:283px;background:#535353"></div>
  <div class="abs" style="left:1501px;top:611px;width:243px;height:26px;background:#454545"></div>
  <div class="abs" style="left:1503px;top:611px;width:45px;height:26px;background:#535353;border-right:1px solid #3e3e3e"></div>
  <div class="abs" style="left:1517px;top:619px;font-size:12.500px;color:#f2f2f2;white-space:nowrap">颜色</div>
  <svg class="abs" style="left:1507px;top:620px" width="6" height="10" viewBox="0 0 6 10"><path d="M0.800 3.600 L3 1.300 L5.200 3.600 M0.800 6.400 L3 8.700 L5.200 6.400" fill="none" stroke="#d0d0d0" stroke-width="1.100"/></svg>
  <div class="abs" style="left:1548px;top:611px;width:54px;height:26px;background:#494949;border-right:1px solid #3e3e3e"></div>
  <div class="abs" style="left:1557px;top:619px;font-size:12.500px;color:#a6a6a6;white-space:nowrap">透明度</div>
  <div class="abs" style="left:1602px;top:611px;width:43px;height:26px;background:#494949;border-right:1px solid #3e3e3e"></div>
  <div class="abs" style="left:1611px;top:619px;font-size:12.500px;color:#a6a6a6;white-space:nowrap">渐变</div>
  <svg class="abs" style="left:1729px;top:621px" width="11" height="7" viewBox="0 0 11 7" shape-rendering="crispEdges"><g fill="#d4d4d4"><rect y="0" width="11" height="1"/><rect y="2" width="11" height="1"/><rect y="4" width="11" height="1"/><rect y="6" width="11" height="1"/></g></svg>
  <svg class="abs" style="left:1506px;top:644px" width="11" height="11" viewBox="0 0 12 12"><rect x="4.500" y="4.500" width="7" height="7" fill="#fff" stroke="#111"/><rect x="5.500" y="5.500" width="4" height="4" fill="#111"/><rect x="1" y="1" width="6.500" height="6.500" fill="#fff" stroke="#111"/></svg>
  <svg class="abs" style="left:1526px;top:644px" width="12" height="12" viewBox="0 0 14 14"><path d="M5 1 L1 4.500 L5 8 V5.800 H8 C9.500 5.800 10 6.500 10 8 V9 H12.500 V7.500 C12.500 4.500 11 3.200 8 3.200 H5 Z" fill="#d2d2d2"/><path d="M7.500 9 H15 L11.250 13.500 Z" fill="#d2d2d2"/></svg>
  <svg class="abs" style="left:1516px;top:672px" width="20" height="20" viewBox="0 0 20 20"><rect x=".5" y=".5" width="19" height="19" fill="#fff" stroke="#222"/><rect x="6" y="6" width="8" height="8" fill="#535353"/><path d="M1 19 L19 1" stroke="#d8141c" stroke-width="2.200"/></svg>
  <div class="abs" style="left:1506px;top:662px;width:20px;height:20px;background:#dcdddd;border:1px solid #f6f6f6;box-shadow:0 0 0 1px #3a3a3a"></div>
  <div class="abs" style="left:1554px;top:651px;font-size:12px;color:#d8d8d8;font-family:'Liberation Serif',serif">R</div>
  <div class="abs" style="left:1572px;top:654px;width:101px;height:4px;background:linear-gradient(90deg,#00dede,#e8dede)"></div>
  <svg class="abs" style="left:1655px;top:658px" width="10" height="8" viewBox="0 0 10 8"><path d="M5 0 L9.500 5 V8 H0.500 V5 Z" fill="#c8c8c8"/></svg>
  <div class="abs" style="left:1682px;top:646px;width:35px;height:19px;background:#464646;border:1px solid #4e4e4e;border-radius:3px"></div>
  <div class="abs" style="left:1685px;top:649px;font-size:11.500px;color:#f4f4f4">220</div>
  <div class="abs" style="left:1554px;top:684px;font-size:12px;color:#d8d8d8;font-family:'Liberation Serif',serif">G</div>
  <div class="abs" style="left:1572px;top:687px;width:101px;height:4px;background:linear-gradient(90deg,#dc00dd,#dce8dd)"></div>
  <svg class="abs" style="left:1655px;top:691px" width="10" height="8" viewBox="0 0 10 8"><path d="M5 0 L9.500 5 V8 H0.500 V5 Z" fill="#c8c8c8"/></svg>
  <div class="abs" style="left:1682px;top:679px;width:35px;height:19px;background:#464646;border:1px solid #4e4e4e;border-radius:3px"></div>
  <div class="abs" style="left:1685px;top:682px;font-size:11.500px;color:#f4f4f4">221</div>
  <div class="abs" style="left:1554px;top:717px;font-size:12px;color:#d8d8d8;font-family:'Liberation Serif',serif">B</div>
  <div class="abs" style="left:1572px;top:720px;width:101px;height:4px;background:linear-gradient(90deg,#dcdd00,#dcdde8)"></div>
  <svg class="abs" style="left:1655px;top:724px" width="10" height="8" viewBox="0 0 10 8"><path d="M5 0 L9.500 5 V8 H0.500 V5 Z" fill="#c8c8c8"/></svg>
  <div class="abs" style="left:1682px;top:712px;width:35px;height:19px;background:#464646;border:1px solid #4e4e4e;border-radius:3px"></div>
  <div class="abs" style="left:1685px;top:715px;font-size:11.500px;color:#f4f4f4">221</div>
  <svg class="abs" style="left:1506px;top:752px" width="40" height="14" viewBox="0 0 40 14"><rect x=".5" y=".5" width="13" height="13" fill="#fff" stroke="#222"/><path d="M1 13 L13 1" stroke="#d8141c" stroke-width="2"/><rect x="14" y="0" width="13" height="14" fill="#000"/><rect x="27.500" y=".5" width="12" height="13" fill="#fff" stroke="#222"/></svg>
  <div class="abs" style="left:1674px;top:754px;font-size:11px;color:#c8c8c8;font-family:'Liberation Mono',monospace">#</div>
  <div class="abs" style="left:1685px;top:749px;width:44px;height:20px;background:#464646;border:1px solid #4e4e4e;border-radius:3px"></div>
  <div class="abs" style="left:1690px;top:753px;font-size:11px;color:#f4f4f4;font-family:'Liberation Serif',serif;letter-spacing:.9px">dcdddd</div>
  <div class="abs" style="left:1507px;top:776px;width:222px;height:110px;background:linear-gradient(180deg,#fff 0%,rgba(255,255,255,0) 50%,rgba(0,0,0,0) 50%,#000 100%),linear-gradient(90deg,#f00 0%,#ff0 17%,#0f0 33%,#0ff 50%,#00f 67%,#f0f 83%,#f00 100%);border:1px solid #3a3a3a"></div>
  <div class="abs" style="left:1501px;top:896px;width:243px;height:26px;background:#454545"></div>
  <div class="abs" style="left:1501px;top:896px;width:243px;height:26px;background:#454545"></div>
  <div class="abs" style="left:1503px;top:896px;width:45px;height:26px;background:#535353;border-right:1px solid #3e3e3e"></div>
  <div class="abs" style="left:1517px;top:904px;font-size:12.500px;color:#f2f2f2;white-space:nowrap">变换</div>
  <svg class="abs" style="left:1507px;top:905px" width="6" height="10" viewBox="0 0 6 10"><path d="M0.800 3.600 L3 1.300 L5.200 3.600 M0.800 6.400 L3 8.700 L5.200 6.400" fill="none" stroke="#d0d0d0" stroke-width="1.100"/></svg>
  <svg class="abs" style="left:1729px;top:906px" width="11" height="7" viewBox="0 0 11 7" shape-rendering="crispEdges"><g fill="#d4d4d4"><rect y="0" width="11" height="1"/><rect y="2" width="11" height="1"/><rect y="4" width="11" height="1"/><rect y="6" width="11" height="1"/></g></svg>
  <div class="abs" style="left:1501px;top:925px;width:243px;height:29px;background:#454545"></div>
  <div class="abs" style="left:1503px;top:925px;width:45px;height:29px;background:#535353;border-right:1px solid #3e3e3e"></div>
  <div class="abs" style="left:1517px;top:935px;font-size:12.500px;color:#f2f2f2;white-space:nowrap">字符</div>
  <svg class="abs" style="left:1507px;top:936px" width="6" height="10" viewBox="0 0 6 10"><path d="M0.800 3.600 L3 1.300 L5.200 3.600 M0.800 6.400 L3 8.700 L5.200 6.400" fill="none" stroke="#d0d0d0" stroke-width="1.100"/></svg>
  <div class="abs" style="left:1548px;top:925px;width:43px;height:29px;background:#494949;border-right:1px solid #3e3e3e"></div>
  <div class="abs" style="left:1557px;top:935px;font-size:12.500px;color:#a6a6a6;white-space:nowrap">段落</div>
  <div class="abs" style="left:1591px;top:925px;width:80px;height:29px;background:#494949;border-right:1px solid #3e3e3e"></div>
  <div class="abs" style="left:1600px;top:935px;font-size:12.500px;color:#a6a6a6;white-space:nowrap">OpenType</div>
  <svg class="abs" style="left:1729px;top:937px" width="11" height="7" viewBox="0 0 11 7" shape-rendering="crispEdges"><g fill="#d4d4d4"><rect y="0" width="11" height="1"/><rect y="2" width="11" height="1"/><rect y="4" width="11" height="1"/><rect y="6" width="11" height="1"/></g></svg>
  <div class="abs" style="left:1501px;top:954px;width:243px;height:2px;background:#3c3c3c"></div>
  <svg class="abs" style="left:1488px;top:848px" width="72" height="60" viewBox="0 0 72 60"><ellipse cx="25" cy="22" rx="23" ry="19" fill="#f2f2f2"/><path d="M10 34 L8 46 L22 39 Z" fill="#f2f2f2"/><circle cx="17" cy="16" r="3" fill="#444"/><circle cx="34" cy="16" r="3" fill="#5a4a40"/><ellipse cx="47" cy="38" rx="21.500" ry="17.500" fill="#2a2a2a"/><ellipse cx="47.700" cy="38.700" rx="20.500" ry="16.600" fill="#f4f4f4"/><path d="M56 51 L62 59 L48 54 Z" fill="#f6f6f6"/><circle cx="40" cy="33" r="2.600" fill="#333"/><circle cx="55" cy="33" r="2.600" fill="#333"/></svg>
  <div class="abs" style="left:1564px;top:862px;font-size:42px;color:#fff;font-weight:500;white-space:nowrap;letter-spacing:1.300px;text-shadow:0 0 2px rgba(0,0,0,.5)">野鹿志</div><!--/PANELS-->
  <!--ALIGN--><div class="abs" style="left:1228px;top:147px;width:231px;height:145px;background:#535353;border:1px solid #3a3a3a;border-top:3px solid #3a3a3a;box-shadow:0 1px 3px rgba(0,0,0,.35)"></div>
  <div class="abs" style="left:1229px;top:151px;width:229px;height:26px;background:#454545"></div>
  <div class="abs" style="left:1229px;top:151px;width:48px;height:26px;background:#535353"></div>
  <div class="abs" style="left:1278px;top:151px;width:78px;height:25px;background:#494949;border-right:1px solid #3e3e3e"></div>
  <svg class="abs" style="left:1233px;top:161px" width="6" height="10" viewBox="0 0 6 10"><path d="M0.800 3.600 L3 1.300 L5.200 3.600 M0.800 6.400 L3 8.700 L5.200 6.400" fill="none" stroke="#d0d0d0" stroke-width="1.100"/></svg>
  <div class="abs" style="left:1244px;top:160px;font-size:12.500px;color:#f2f2f2;white-space:nowrap">对齐</div>
  <div class="abs" style="left:1287px;top:160px;font-size:12.500px;color:#a6a6a6;white-space:nowrap">路径查找器</div>
  <svg class="abs" style="left:1418px;top:161px" width="10" height="8" viewBox="0 0 10 8"><path d="M1 1 L4 4 L1 7 M6 1 L9 4 L6 7" fill="none" stroke="#e0e0e0" stroke-width="1.400"/></svg>
  <div class="abs" style="left:1435px;top:158px;width:1px;height:13px;background:#8a8a8a"></div>
  <svg class="abs" style="left:1443px;top:161px" width="11" height="7" viewBox="0 0 11 7" shape-rendering="crispEdges"><g fill="#d4d4d4"><rect y="0" width="11" height="1"/><rect y="2" width="11" height="1"/><rect y="4" width="11" height="1"/><rect y="6" width="11" height="1"/></g></svg>
  <div class="abs" style="left:1234px;top:187px;font-size:12px;color:#d0d0d0;white-space:nowrap;letter-spacing:.2px">对齐对象 :</div>
  <div class="abs" style="left:1234px;top:244px;font-size:12px;color:#d0d0d0;white-space:nowrap;letter-spacing:.2px">分布对象 :</div>
  <div class="abs" style="left:1234px;top:235px;width:220px;height:1px;background:#484848"></div>
  <svg class="abs" style="left:1236px;top:205px" width="22" height="22" viewBox="0 0 22 22"><g fill="#d2d2d2"><rect x="3" y="1.5" width="1.3" height="19"/><rect x="5" y="4" width="8" height="6"/><rect x="5" y="12" width="13" height="6"/></g></svg>
  <svg class="abs" style="left:1271px;top:205px" width="22" height="22" viewBox="0 0 22 22"><g fill="#d2d2d2"><rect x="10.3" y="1.5" width="1.3" height="19"/><rect x="7" y="4" width="8" height="6"/><rect x="4.5" y="12" width="13" height="6"/></g></svg>
  <svg class="abs" style="left:1308px;top:205px" width="22" height="22" viewBox="0 0 22 22"><g fill="#d2d2d2"><rect x="17.7" y="1.5" width="1.3" height="19"/><rect x="9" y="4" width="8" height="6"/><rect x="4" y="12" width="13" height="6"/></g></svg>
  <svg class="abs" style="left:1358px;top:205px" width="22" height="22" viewBox="0 0 22 22"><g fill="#d2d2d2"><rect x="2" y="3" width="18" height="1.3"/><rect x="5" y="5" width="6" height="13"/><rect x="12" y="5" width="6" height="8"/></g></svg>
  <svg class="abs" style="left:1394px;top:205px" width="22" height="22" viewBox="0 0 22 22"><g fill="#d2d2d2"><rect x="2" y="10.3" width="18" height="1.3"/><rect x="5" y="4" width="6" height="13"/><rect x="12" y="6.5" width="6" height="8"/></g></svg>
  <svg class="abs" style="left:1430px;top:205px" width="22" height="22" viewBox="0 0 22 22"><g fill="#d2d2d2"><rect x="2" y="17.7" width="18" height="1.3"/><rect x="5" y="4" width="6" height="13"/><rect x="12" y="9" width="6" height="8"/></g></svg>
  <svg class="abs" style="left:1236px;top:262px" width="22" height="22" viewBox="0 0 22 22"><g fill="#d2d2d2"><rect x="2" y="3" width="18" height="1.3"/><rect x="6" y="5" width="9" height="4"/><rect x="2" y="11.5" width="18" height="1.3"/><rect x="5" y="13.5" width="11" height="5"/></g></svg>
  <svg class="abs" style="left:1271px;top:262px" width="22" height="22" viewBox="0 0 22 22"><g fill="#d2d2d2"><rect x="2" y="5.3" width="18" height="1.3"/><rect x="6" y="3.5" width="9" height="5"/><rect x="2" y="14.8" width="18" height="1.3"/><rect x="5" y="12.5" width="11" height="6"/></g></svg>
  <svg class="abs" style="left:1308px;top:262px" width="22" height="22" viewBox="0 0 22 22"><g fill="#d2d2d2"><rect x="6" y="2.5" width="9" height="4"/><rect x="2" y="7.5" width="18" height="1.3"/><rect x="5" y="12" width="11" height="5"/><rect x="2" y="18" width="18" height="1.3"/></g></svg>
  <svg class="abs" style="left:1358px;top:262px" width="22" height="22" viewBox="0 0 22 22"><g fill="#d2d2d2"><rect x="2" y="2" width="1.3" height="18"/><rect x="4.5" y="5" width="5" height="12"/><rect x="11.5" y="2" width="1.3" height="18"/><rect x="14" y="7" width="4" height="8"/></g></svg>
  <svg class="abs" style="left:1394px;top:262px" width="22" height="22" viewBox="0 0 22 22"><g fill="#d2d2d2"><rect x="5.3" y="2" width="1.3" height="18"/><rect x="3.5" y="5" width="5" height="12"/><rect x="14.8" y="2" width="1.3" height="18"/><rect x="13" y="7" width="5" height="8"/></g></svg>
  <svg class="abs" style="left:1430px;top:262px" width="22" height="22" viewBox="0 0 22 22"><g fill="#d2d2d2"><rect x="4" y="5" width="5" height="12"/><rect x="10" y="2" width="1.3" height="18"/><rect x="13" y="7" width="4" height="8"/><rect x="18" y="2" width="1.3" height="18"/></g></svg><!--/ALIGN-->
  <div class="abs" style="left:0;top:0;width:1751px;height:1px;background:#0c0c0c;z-index:50"></div>
  <div class="abs" style="left:0;top:0;width:1px;height:959px;background:#1c1c1c;z-index:50"></div>
  <div class="abs" style="left:1750px;top:0;width:1px;height:959px;background:#1c1c1c;z-index:50"></div>
  <div class="abs" style="left:0;top:958px;width:1751px;height:1px;background:#1c1c1c;z-index:50"></div>
</div>
</body>
</html>
